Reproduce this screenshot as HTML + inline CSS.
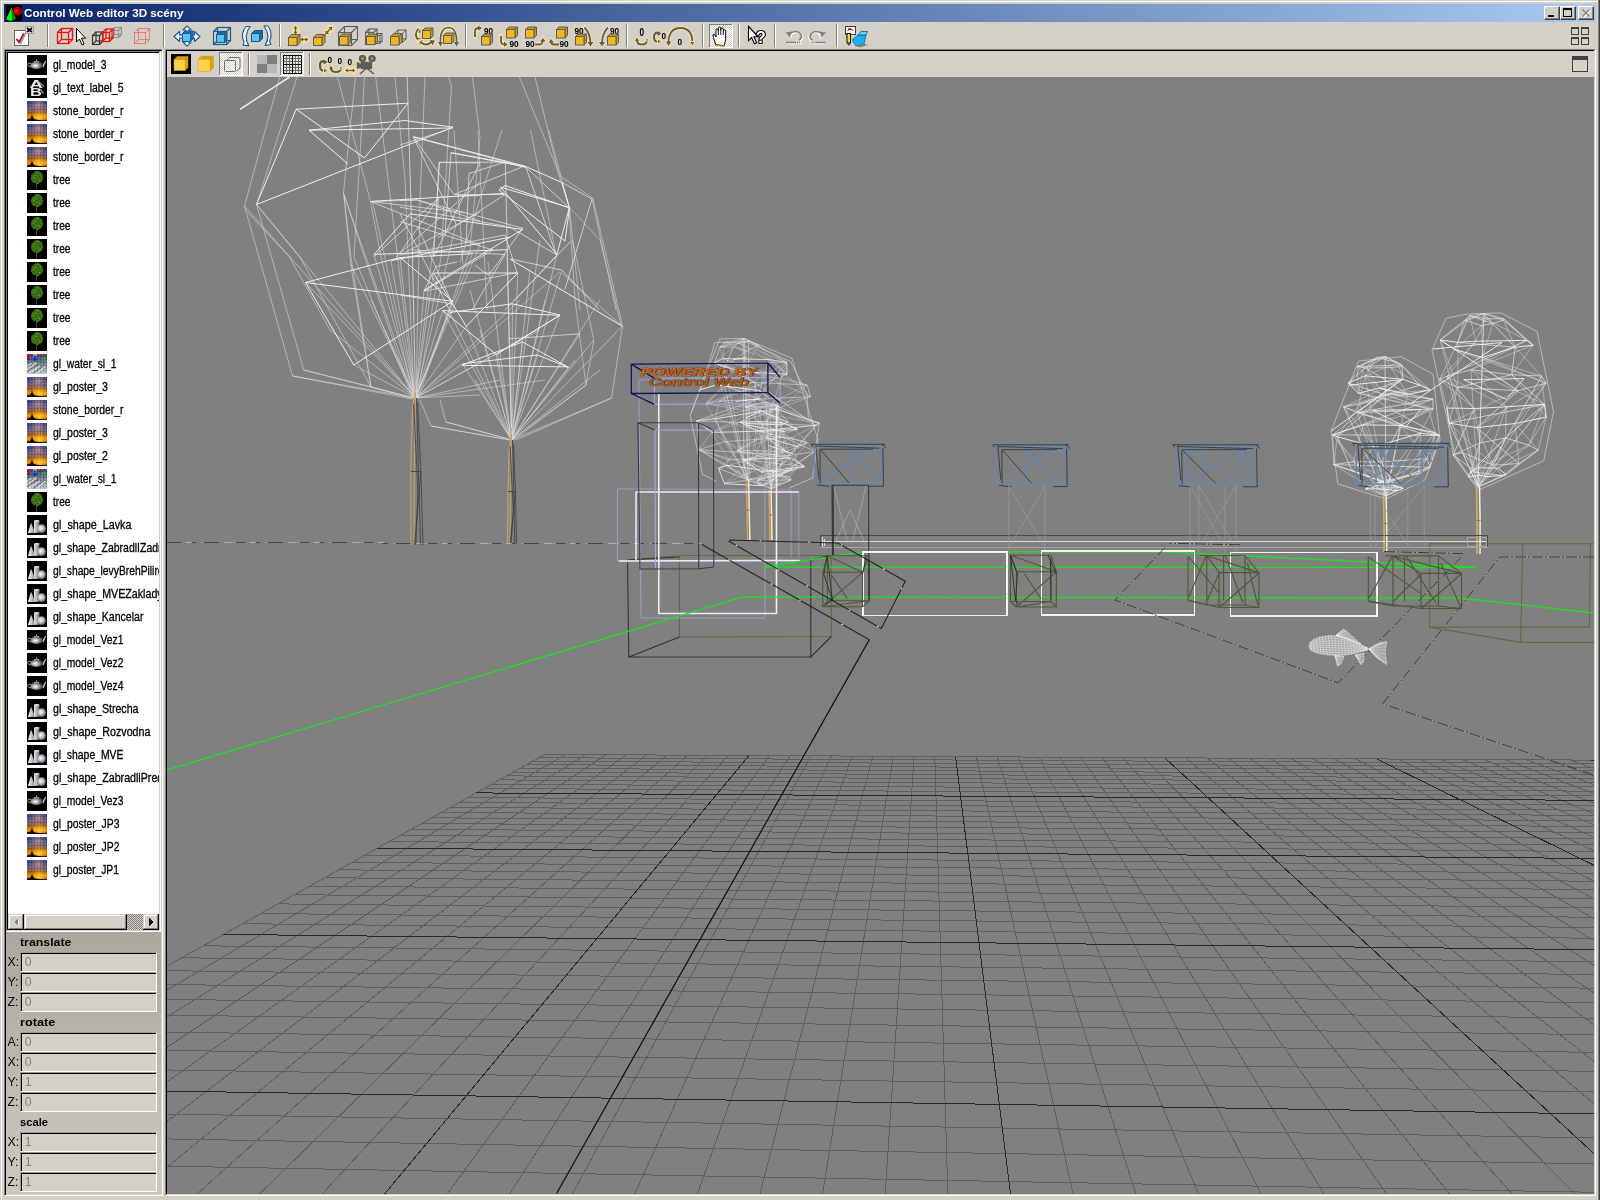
<!DOCTYPE html><html lang="cs"><head><meta charset="utf-8"><title>Control Web editor 3D scény</title><style>
*{margin:0;padding:0;box-sizing:border-box}
html,body{width:1600px;height:1200px;overflow:hidden;background:#d4d0c8;font-family:"Liberation Sans",sans-serif;font-size:11px;color:#000}
.a{position:absolute}
#win{position:absolute;left:0;top:0;width:1600px;height:1200px;background:#d4d0c8}
#title{left:4px;top:4px;width:1592px;height:18px;background:linear-gradient(90deg,#0a246a 0%,#a6caf0 100%)}
#title span{position:absolute;left:19.5px;top:2px;color:#fff;font-weight:bold;font-size:11px;line-height:14px;white-space:nowrap;transform-origin:0 0;transform:scaleX(1.062)}
.cb{position:absolute;top:6px;width:16px;height:14px;background:#d4d0c8;border:1px solid;border-color:#fff #404040 #404040 #fff;box-shadow:inset -1px -1px 0 #808080}
.sep{position:absolute;top:24px;width:2px;height:23px;border-left:1px solid #808080;border-right:1px solid #fff}
.sep2{position:absolute;top:53px;width:2px;height:22px;border-left:1px solid #808080;border-right:1px solid #fff}
#list{left:8px;top:53px;width:151px;height:861px;background:#fff;overflow:hidden}
.it{position:absolute;left:0;width:152px;height:23px}
.it svg{position:absolute;left:19px;top:2px}
.it span{position:absolute;left:44.5px;top:5px;line-height:14px;white-space:nowrap;font-size:12.3px;transform-origin:0 0;display:inline-block}
.lbl{position:absolute;left:7.5px;width:14px;line-height:14px;font-size:12.3px;white-space:nowrap}
.hd{position:absolute;left:19.5px;font-weight:bold;line-height:14px;font-size:11px;transform-origin:0 0}
.fld{position:absolute;left:20px;width:137px;height:20px;background:#d4d0c8;border-top:1px solid #9c988f;border-left:1px solid #9c988f;border-bottom:1px solid #fff;border-right:1px solid #fff;box-shadow:inset 1px 1px 0 #000}
.fld span{position:absolute;left:3.7px;top:1.7px;color:#808080;line-height:14px;font-size:12.3px}
.it span,.lbl,.hd,.fld span{filter:grayscale(1)}
.it span{-webkit-text-stroke:0.3px #000}
</style></head><body><div id="win">
<div class="a" style="left:1px;top:1px;width:1597px;height:1px;background:#fff"></div>
<div class="a" style="left:1px;top:1px;width:1px;height:1199px;background:#fff"></div>
<div class="a" style="left:1598px;top:0;width:1px;height:1200px;background:#808080"></div>
<div class="a" style="left:1599px;top:0;width:1px;height:1200px;background:#404040"></div>
<div id="title" class="a"><svg width="16" height="16" viewBox="0 0 16 16" style="position:absolute;left:2px;top:1px" ><rect width="16" height="16" fill="#000"/><circle cx="11.600" cy="6.200" r="4.400" fill="#980000"/><rect x="8.300" y="4" width="3.800" height="4" fill="#ff0000"/><rect x="12" y="4.500" width="1" height="3" fill="#c00000"/><path d="M5.300 3L0.200 14Q2.500 16.200 6 15.800V3.500z" fill="#00ff00"/><path d="M5.500 3L10 13.500Q8.500 15.500 6 15.800z" fill="#008800"/></svg><span>Control Web editor 3D scény</span></div>
<div class="cb" style="left:1544px"><svg width="14" height="12" viewBox="0 0 14 12" style="position:absolute;left:0;top:0" ><rect x="3" y="8" width="6" height="2" fill="#000"/></svg></div>
<div class="cb" style="left:1560px"><svg width="14" height="12" viewBox="0 0 14 12" style="position:absolute;left:0;top:0" ><rect x="2.5" y="1.5" width="8" height="8" fill="none" stroke="#000"/><rect x="2" y="1" width="9" height="2" fill="#000"/></svg></div>
<div class="cb" style="left:1578px"><svg width="14" height="12" viewBox="0 0 14 12" style="position:absolute;left:0;top:0" ><path d="M4.5 3.5l7 7M11.5 3.5l-7 7" stroke="#fff" stroke-width="1.1"/><path d="M3.5 2.5l7 7M10.5 2.5l-7 7" stroke="#808080" stroke-width="1.2" /></svg></div>
<svg width="1600" height="28" viewBox="0 22 1600 28" style="position:absolute;left:0;top:22px" shape-rendering="geometricPrecision"><defs><pattern id="dith" width="2" height="2" patternUnits="userSpaceOnUse"><rect width="2" height="2" fill="#fff"/><rect width="1" height="1" fill="#d4d0c8"/><rect x="1" y="1" width="1" height="1" fill="#d4d0c8"/></pattern></defs><rect x="47" y="24" width="1" height="23" fill="#808080"/><rect x="48" y="24" width="1" height="23" fill="#fff"/><rect x="163" y="24" width="1" height="23" fill="#808080"/><rect x="164" y="24" width="1" height="23" fill="#fff"/><rect x="279" y="24" width="1" height="23" fill="#808080"/><rect x="280" y="24" width="1" height="23" fill="#fff"/><rect x="465" y="24" width="1" height="23" fill="#808080"/><rect x="466" y="24" width="1" height="23" fill="#fff"/><rect x="626" y="24" width="1" height="23" fill="#808080"/><rect x="627" y="24" width="1" height="23" fill="#fff"/><rect x="702" y="24" width="1" height="23" fill="#808080"/><rect x="703" y="24" width="1" height="23" fill="#fff"/><rect x="738" y="24" width="1" height="23" fill="#808080"/><rect x="739" y="24" width="1" height="23" fill="#fff"/><rect x="774" y="24" width="1" height="23" fill="#808080"/><rect x="775" y="24" width="1" height="23" fill="#fff"/><rect x="836" y="24" width="1" height="23" fill="#808080"/><rect x="837" y="24" width="1" height="23" fill="#fff"/><g shape-rendering="crispEdges"><rect x="14.5" y="30.5" width="14" height="15" fill="#fff" stroke="#686868"/><rect x="25.5" y="26.5" width="8" height="7" fill="#e8e8e8" stroke="#a0a0a0"/></g><path d="M27 28l5 4M32 28l-5 4" stroke="#000" stroke-width="1.800"/><path d="M16.300 39l2.800 3.300L23.800 33.300" stroke="#a4a0b8" stroke-width="2" fill="none" transform="translate(1.6,0.6)"/><path d="M16.300 39l2.800 3.300L23.800 33.300" stroke="#b00808" stroke-width="1.700" fill="none"/><g fill="none" stroke="#f01010" stroke-width="1.3"><rect x="57.5" y="32.5" width="11" height="11"/><rect x="61.5" y="28.5" width="11" height="11"/><path d="M57.5 32.5l4 -4M68.5 32.5l4 -4M68.5 43.5l4 -4M57.5 43.5l4 -4"/></g><path d="M76.5 28.5v13.5l3-3 2.6 6 2-1-2.6-5.8h4.2z" fill="#fff" stroke="#000" stroke-width="1" stroke-linejoin="miter"/><g fill="none" stroke="#909090" stroke-width="1.1"><rect x="111.5" y="30.5" width="7" height="7"/><rect x="114.5" y="27.5" width="7" height="7"/><path d="M111.5 30.5l3 -3M118.5 30.5l3 -3M118.5 37.5l3 -3M111.5 37.5l3 -3"/></g><g fill="none" stroke="#383838" stroke-width="1.2"><rect x="92.5" y="35.5" width="7" height="9"/><rect x="96" y="32" width="7" height="9"/><path d="M92.5 35.5l3.5 -3.5M99.5 35.5l3.5 -3.5M99.5 44.5l3.5 -3.5M92.5 44.5l3.5 -3.5"/></g><g fill="none" stroke="#f01010" stroke-width="1.3"><rect x="102.5" y="32.5" width="7" height="9"/><rect x="106" y="29" width="7" height="9"/><path d="M102.5 32.5l3.5 -3.5M109.5 32.5l3.5 -3.5M109.5 41.5l3.5 -3.5M102.5 41.5l3.5 -3.5"/></g><g fill="none" stroke="#f83030" stroke-width="1" stroke-dasharray="1 1"><rect x="134.5" y="32.5" width="11" height="11"/><rect x="138.5" y="28.5" width="11" height="11"/><path d="M134.5 32.5l4 -4M145.5 32.5l4 -4M145.5 43.5l4 -4M134.5 43.5l4 -4"/></g><g fill="#fff" stroke="#1c5c94" stroke-width="1.2" stroke-linejoin="round"><path d="M174 36.5l5.5-5v3.4h4v3.2h-4v3.4z"/><path d="M200 36.5l-5.5-5v3.4h-4v3.2h4v3.4z"/><path d="M187 25.8l4 4.2h-2.4v2.5h-3.2V30H183z"/><path d="M187 46.2l4-4.2h-2.4v-2h-3.2v2H183z"/></g><polygon points="182.5,33.5 185,31 193,31 190.5,33.5" fill="#1c6ca4" stroke="#1c5c94" stroke-width="1" stroke-linejoin="round"/><polygon points="190.5,33.5 193,31 193,39 190.5,41.5" fill="#1c6ca4" stroke="#1c5c94" stroke-width="1" stroke-linejoin="round"/><rect x="182.5" y="33.5" width="8" height="8" fill="#5cc0f8" stroke="#1c5c94" stroke-width="1"/><g fill="none" stroke="#1c5c94" stroke-width="1.2"><rect x="213.5" y="31.5" width="13" height="13"/><rect x="217.5" y="27.5" width="13" height="13"/><path d="M213.5 31.5l4 -4M226.5 31.5l4 -4M226.5 44.5l4 -4M213.5 44.5l4 -4"/></g><polygon points="216.5,34.5 219,32 227,32 224.5,34.5" fill="#1c6ca4" stroke="#1c5c94" stroke-width="1" stroke-linejoin="round"/><polygon points="224.5,34.5 227,32 227,40 224.5,42.5" fill="#1c6ca4" stroke="#1c5c94" stroke-width="1" stroke-linejoin="round"/><rect x="216.5" y="34.5" width="8" height="8" fill="#5cc0f8" stroke="#1c5c94" stroke-width="1"/><g fill="#fff" stroke="#1c5c94" stroke-width="1.2" stroke-linejoin="round"><path d="M250 26.5q-7 9.5-1.2 19.3l-5.6-.6.8-3.6q-4-7.6 2-15.1z"/><path d="M264 26q7 9.5 1.2 19.5l5.6-1-1.2-3.3q3.6-8-1.6-15.2z"/></g><polygon points="251.5,33.5 254.5,30.5 262.5,30.5 259.5,33.5" fill="#1c6ca4" stroke="#1c5c94" stroke-width="1" stroke-linejoin="round"/><polygon points="259.5,33.5 262.5,30.5 262.5,38.5 259.5,41.5" fill="#1c6ca4" stroke="#1c5c94" stroke-width="1" stroke-linejoin="round"/><rect x="251.5" y="33.5" width="8" height="8" fill="#5cc0f8" stroke="#1c5c94" stroke-width="1"/><path d="M295.5 26.3L295.5 34.0M295.5 34.0L293.3 31.8L297.7 31.8ZM295.5 26.3L293.3 28.5L297.7 28.5Z" stroke="#ffe48c" stroke-width="3.3" fill="#ffe48c" stroke-linejoin="round"/><path d="M295.5 26.3L295.5 34.0" stroke="#5c5c64" stroke-width="1.3" fill="none"/><path d="M295.5 34.0L293.3 31.8L297.7 31.8ZM295.5 26.3L293.3 28.5L297.7 28.5Z" fill="#5c5c64"/><path d="M300.5 39.5L308.0 39.5M308.0 39.5L305.8 41.7L305.8 37.3ZM300.5 39.5L302.7 41.7L302.7 37.3Z" stroke="#ffe48c" stroke-width="3.3" fill="#ffe48c" stroke-linejoin="round"/><path d="M300.5 39.5L308.0 39.5" stroke="#5c5c64" stroke-width="1.3" fill="none"/><path d="M308.0 39.5L305.8 41.7L305.8 37.3ZM300.5 39.5L302.7 41.7L302.7 37.3Z" fill="#5c5c64"/><polygon points="288.5,37.5 291.5,34.5 300,34.5 297,37.5" fill="#d09c08" stroke="#5c5c64" stroke-width="1" stroke-linejoin="round"/><polygon points="297,37.5 300,34.5 300,42.5 297,45.5" fill="#d09c08" stroke="#5c5c64" stroke-width="1" stroke-linejoin="round"/><rect x="288.5" y="37.5" width="8.5" height="8" fill="#f0b81c" stroke="#5c5c64" stroke-width="1"/><path d="M325.5 34.0L332.0 27.0M332.0 27.0L332.1 30.7L328.3 27.1ZM325.5 34.0L329.2 33.9L325.4 30.3Z" stroke="#ffe48c" stroke-width="3.3" fill="#ffe48c" stroke-linejoin="round"/><path d="M325.5 34.0L332.0 27.0" stroke="#5c5c64" stroke-width="1.3" fill="none"/><path d="M332.0 27.0L332.1 30.7L328.3 27.1ZM325.5 34.0L329.2 33.9L325.4 30.3Z" fill="#5c5c64"/><polygon points="313.5,37.5 316.5,34.5 325,34.5 322,37.5" fill="#d09c08" stroke="#5c5c64" stroke-width="1" stroke-linejoin="round"/><polygon points="322,37.5 325,34.5 325,42.5 322,45.5" fill="#d09c08" stroke="#5c5c64" stroke-width="1" stroke-linejoin="round"/><rect x="313.5" y="37.5" width="8.5" height="8" fill="#f0b81c" stroke="#5c5c64" stroke-width="1"/><g fill="none" stroke="#5c5c64" stroke-width="1.1"><rect x="338.5" y="32.5" width="13" height="13"/><rect x="344.5" y="26.5" width="13" height="13"/><path d="M338.5 32.5l6 -6M351.5 32.5l6 -6M351.5 45.5l6 -6M338.5 45.5l6 -6"/></g><polygon points="339.5,36.5 342,34 350.5,34 348,36.5" fill="#d09c08" stroke="#5c5c64" stroke-width="1" stroke-linejoin="round"/><polygon points="348,36.5 350.5,34 350.5,42.5 348,45" fill="#d09c08" stroke="#5c5c64" stroke-width="1" stroke-linejoin="round"/><rect x="339.5" y="36.5" width="8.5" height="8.5" fill="#f0b81c" stroke="#5c5c64" stroke-width="1"/><g fill="none" stroke="#5c5c64" stroke-width="1.1"><rect x="365.5" y="32.5" width="8" height="12"/><rect x="369" y="29" width="8" height="12"/><path d="M365.5 32.5l3.5 -3.5M373.5 32.5l3.5 -3.5M373.5 44.5l3.5 -3.5M365.5 44.5l3.5 -3.5"/></g><g fill="none" stroke="#5c5c64" stroke-width="1"><rect x="375" y="35.5" width="5" height="8"/><rect x="377" y="33.5" width="5" height="8"/><path d="M375 35.5l2 -2M380 35.5l2 -2M380 43.5l2 -2M375 43.5l2 -2"/></g><polygon points="366.5,36.5 369,34 377.5,34 375,36.5" fill="#d09c08" stroke="#5c5c64" stroke-width="1" stroke-linejoin="round"/><polygon points="375,36.5 377.5,34 377.5,42 375,44.5" fill="#d09c08" stroke="#5c5c64" stroke-width="1" stroke-linejoin="round"/><rect x="366.5" y="36.5" width="8.5" height="8" fill="#f0b81c" stroke="#5c5c64" stroke-width="1"/><g fill="none" stroke="#5c5c64" stroke-width="1"><rect x="394.5" y="33.5" width="8" height="9"/><rect x="398" y="30" width="8" height="9"/><path d="M394.5 33.5l3.5 -3.5M402.5 33.5l3.5 -3.5M402.5 42.5l3.5 -3.5M394.5 42.5l3.5 -3.5"/></g><polygon points="390.5,36.5 393.5,33.5 402,33.5 399,36.5" fill="#d09c08" stroke="#5c5c64" stroke-width="1" stroke-linejoin="round"/><polygon points="399,36.5 402,33.5 402,42 399,45" fill="#d09c08" stroke="#5c5c64" stroke-width="1" stroke-linejoin="round"/><rect x="390.5" y="36.5" width="8.5" height="8.5" fill="#f0b81c" stroke="#5c5c64" stroke-width="1"/><path d="M419 30q-5 5 0 10" stroke="#ffe48c" stroke-width="3.8" fill="none" stroke-linecap="round"/><polygon points="415.5,31.5 420.5,28.5 420.5,33" fill="#ffe48c" stroke="#ffe48c" stroke-width="2" stroke-linejoin="round"/><path d="M419 30q-5 5 0 10" stroke="#5c5c64" stroke-width="1.8" fill="none"/><polygon points="415.5,31.5 420.5,28.5 420.5,33" fill="#5c5c64"/><path d="M418.5 28.5q-5.5 6 0.5 12.5" stroke="#ffe48c" stroke-width="3.8" fill="none" stroke-linecap="round"/><polygon points="416,38 421.5,38.5 419,43" fill="#ffe48c" stroke="#ffe48c" stroke-width="2" stroke-linejoin="round"/><path d="M418.5 28.5q-5.5 6 0.5 12.5" stroke="#5c5c64" stroke-width="1.8" fill="none"/><polygon points="416,38 421.5,38.5 419,43" fill="#5c5c64"/><path d="M420 41.5q6 6 12 0" stroke="#ffe48c" stroke-width="3.8" fill="none" stroke-linecap="round"/><polygon points="418,40.5 423,40 420,45.5" fill="#ffe48c" stroke="#ffe48c" stroke-width="2" stroke-linejoin="round"/><path d="M420 41.5q6 6 12 0" stroke="#5c5c64" stroke-width="1.8" fill="none"/><polygon points="418,40.5 423,40 420,45.5" fill="#5c5c64"/><path d="M420 41.5q6 6 12 0" stroke="#ffe48c" stroke-width="3.8" fill="none" stroke-linecap="round"/><polygon points="430,40 435,40.5 432.5,45.5" fill="#ffe48c" stroke="#ffe48c" stroke-width="2" stroke-linejoin="round"/><path d="M420 41.5q6 6 12 0" stroke="#5c5c64" stroke-width="1.8" fill="none"/><polygon points="430,40 435,40.5 432.5,45.5" fill="#5c5c64"/><polygon points="422.5,30.5 425,28 433,28 430.5,30.5" fill="#d09c08" stroke="#5c5c64" stroke-width="1" stroke-linejoin="round"/><polygon points="430.5,30.5 433,28 433,36 430.5,38.5" fill="#d09c08" stroke="#5c5c64" stroke-width="1" stroke-linejoin="round"/><rect x="422.5" y="30.5" width="8" height="8" fill="#f0b81c" stroke="#5c5c64" stroke-width="1"/><path d="M440.5 44q-1-16 8-16.5q9 .5 8 16.5" stroke="#ffe48c" stroke-width="3.6" fill="none" stroke-linecap="round"/><polygon points="438,42 443,42 440.5,46.5" fill="#ffe48c" stroke="#ffe48c" stroke-width="2" stroke-linejoin="round"/><path d="M440.5 44q-1-16 8-16.5q9 .5 8 16.5" stroke="#5c5c64" stroke-width="1.6" fill="none"/><polygon points="438,42 443,42 440.5,46.5" fill="#5c5c64"/><polygon points="454,42 459,42 456.5,46.5" fill="#5c5c64"/><polygon points="443.5,35.5 446,33 454,33 451.5,35.5" fill="#d09c08" stroke="#5c5c64" stroke-width="1" stroke-linejoin="round"/><polygon points="451.5,35.5 454,33 454,41 451.5,43.5" fill="#d09c08" stroke="#5c5c64" stroke-width="1" stroke-linejoin="round"/><rect x="443.5" y="35.5" width="8" height="8" fill="#f0b81c" stroke="#5c5c64" stroke-width="1"/><path d="M475 37v-6q0-3 4-3" stroke="#ffe48c" stroke-width="3.8" fill="none" stroke-linecap="round"/><polygon points="478,25.5 482,28 478,30.8" fill="#ffe48c" stroke="#ffe48c" stroke-width="2" stroke-linejoin="round"/><path d="M475 37v-6q0-3 4-3" stroke="#5c5c64" stroke-width="1.8" fill="none"/><polygon points="478,25.5 482,28 478,30.8" fill="#5c5c64"/><text x="484" y="34" font-family="Liberation Sans,sans-serif" font-size="9" font-weight="bold" fill="#000" textLength="9.2" lengthAdjust="spacingAndGlyphs" style="filter:grayscale(1)">90</text><polygon points="481.5,36.5 484,34 492.5,34 490,36.5" fill="#d09c08" stroke="#5c5c64" stroke-width="1" stroke-linejoin="round"/><polygon points="490,36.5 492.5,34 492.5,42.5 490,45" fill="#d09c08" stroke="#5c5c64" stroke-width="1" stroke-linejoin="round"/><rect x="481.5" y="36.5" width="8.5" height="8.5" fill="#f0b81c" stroke="#5c5c64" stroke-width="1"/><path d="M501 36v5q0 3.5 4 3.5" stroke="#ffe48c" stroke-width="3.8" fill="none" stroke-linecap="round"/><polygon points="504,41.5 507.5,44.5 504,47" fill="#ffe48c" stroke="#ffe48c" stroke-width="2" stroke-linejoin="round"/><path d="M501 36v5q0 3.5 4 3.5" stroke="#5c5c64" stroke-width="1.8" fill="none"/><polygon points="504,41.5 507.5,44.5 504,47" fill="#5c5c64"/><text x="509.5" y="47.3" font-family="Liberation Sans,sans-serif" font-size="9" font-weight="bold" fill="#000" textLength="9.2" lengthAdjust="spacingAndGlyphs" style="filter:grayscale(1)">90</text><polygon points="506.5,29.5 509,27 517.5,27 515,29.5" fill="#d09c08" stroke="#5c5c64" stroke-width="1" stroke-linejoin="round"/><polygon points="515,29.5 517.5,27 517.5,35.5 515,38" fill="#d09c08" stroke="#5c5c64" stroke-width="1" stroke-linejoin="round"/><rect x="506.5" y="29.5" width="8.5" height="8.5" fill="#f0b81c" stroke="#5c5c64" stroke-width="1"/><path d="M535 44.5h4q3.5 0 3.500-3.5" stroke="#ffe48c" stroke-width="3.8" fill="none" stroke-linecap="round"/><polygon points="540,41.5 543,38 545.5,41.5" fill="#ffe48c" stroke="#ffe48c" stroke-width="2" stroke-linejoin="round"/><path d="M535 44.5h4q3.5 0 3.500-3.5" stroke="#5c5c64" stroke-width="1.8" fill="none"/><polygon points="540,41.5 543,38 545.5,41.5" fill="#5c5c64"/><text x="525.5" y="47.3" font-family="Liberation Sans,sans-serif" font-size="9" font-weight="bold" fill="#000" textLength="9.2" lengthAdjust="spacingAndGlyphs" style="filter:grayscale(1)">90</text><polygon points="525.5,29.5 528,27 536.5,27 534,29.5" fill="#d09c08" stroke="#5c5c64" stroke-width="1" stroke-linejoin="round"/><polygon points="534,29.5 536.5,27 536.5,35.5 534,38" fill="#d09c08" stroke="#5c5c64" stroke-width="1" stroke-linejoin="round"/><rect x="525.5" y="29.5" width="8.5" height="8.5" fill="#f0b81c" stroke="#5c5c64" stroke-width="1"/><path d="M559 44.5h-5q-3 0-3-3" stroke="#ffe48c" stroke-width="3.8" fill="none" stroke-linecap="round"/><polygon points="548.5,42.5 551,39 554,42.5" fill="#ffe48c" stroke="#ffe48c" stroke-width="2" stroke-linejoin="round"/><path d="M559 44.5h-5q-3 0-3-3" stroke="#5c5c64" stroke-width="1.8" fill="none"/><polygon points="548.5,42.5 551,39 554,42.5" fill="#5c5c64"/><text x="559.5" y="47.3" font-family="Liberation Sans,sans-serif" font-size="9" font-weight="bold" fill="#000" textLength="9.2" lengthAdjust="spacingAndGlyphs" style="filter:grayscale(1)">90</text><polygon points="556.5,29.5 559,27 567.5,27 565,29.5" fill="#d09c08" stroke="#5c5c64" stroke-width="1" stroke-linejoin="round"/><polygon points="565,29.5 567.5,27 567.5,35.5 565,38" fill="#d09c08" stroke="#5c5c64" stroke-width="1" stroke-linejoin="round"/><rect x="556.5" y="29.5" width="8.5" height="8.5" fill="#f0b81c" stroke="#5c5c64" stroke-width="1"/><path d="M584.5 27.500q6 6 6 16" stroke="#ffe48c" stroke-width="3.8" fill="none" stroke-linecap="round"/><polygon points="587.5,42 593.5,42 590.5,46.5" fill="#ffe48c" stroke="#ffe48c" stroke-width="2" stroke-linejoin="round"/><path d="M584.5 27.500q6 6 6 16" stroke="#5c5c64" stroke-width="1.8" fill="none"/><polygon points="587.5,42 593.5,42 590.5,46.5" fill="#5c5c64"/><text x="574.5" y="34" font-family="Liberation Sans,sans-serif" font-size="9" font-weight="bold" fill="#000" textLength="9.2" lengthAdjust="spacingAndGlyphs" style="filter:grayscale(1)">90</text><polygon points="575.5,36.5 578,34 586.5,34 584,36.5" fill="#d09c08" stroke="#5c5c64" stroke-width="1" stroke-linejoin="round"/><polygon points="584,36.5 586.5,34 586.5,42.5 584,45" fill="#d09c08" stroke="#5c5c64" stroke-width="1" stroke-linejoin="round"/><rect x="575.5" y="36.5" width="8.5" height="8.5" fill="#f0b81c" stroke="#5c5c64" stroke-width="1"/><path d="M608 27.500q-6 6-6 16" stroke="#ffe48c" stroke-width="3.8" fill="none" stroke-linecap="round"/><polygon points="599,42 605,42 602,46.5" fill="#ffe48c" stroke="#ffe48c" stroke-width="2" stroke-linejoin="round"/><path d="M608 27.500q-6 6-6 16" stroke="#5c5c64" stroke-width="1.8" fill="none"/><polygon points="599,42 605,42 602,46.5" fill="#5c5c64"/><text x="610" y="34" font-family="Liberation Sans,sans-serif" font-size="9" font-weight="bold" fill="#000" textLength="9.2" lengthAdjust="spacingAndGlyphs" style="filter:grayscale(1)">90</text><polygon points="607.5,36.5 610,34 618.5,34 616,36.5" fill="#d09c08" stroke="#5c5c64" stroke-width="1" stroke-linejoin="round"/><polygon points="616,36.5 618.5,34 618.5,42.5 616,45" fill="#d09c08" stroke="#5c5c64" stroke-width="1" stroke-linejoin="round"/><rect x="607.5" y="36.5" width="8.5" height="8.5" fill="#f0b81c" stroke="#5c5c64" stroke-width="1"/><text x="639.5" y="36" font-family="Liberation Sans,sans-serif" font-size="10" font-weight="bold" fill="#000" textLength="4.6" lengthAdjust="spacingAndGlyphs" style="filter:grayscale(1)">0</text><path d="M637 40q0 4.500 5 4.500q5 0 5-4.500" stroke="#ffe48c" stroke-width="4" fill="none" stroke-linecap="round"/><polygon points="635,41 639,41 637,37.5" fill="#ffe48c" stroke="#ffe48c" stroke-width="2" stroke-linejoin="round"/><path d="M637 40q0 4.500 5 4.500q5 0 5-4.500" stroke="#5c5c64" stroke-width="2" fill="none"/><polygon points="635,41 639,41 637,37.5" fill="#5c5c64"/><polygon points="645,41 649,41 647,37.5" fill="#5c5c64" stroke="#ffe48c" stroke-width="1"/><path d="M659 33.500q-5-2-5 3.500q0 6 5 4" stroke="#ffe48c" stroke-width="4.2" fill="none" stroke-linecap="round"/><polygon points="657.5,31 661.5,33.5 657.5,36" fill="#ffe48c" stroke="#ffe48c" stroke-width="2" stroke-linejoin="round"/><path d="M659 33.500q-5-2-5 3.500q0 6 5 4" stroke="#5c5c64" stroke-width="2.2" fill="none"/><polygon points="657.5,31 661.5,33.5 657.5,36" fill="#5c5c64"/><polygon points="657.5,39 661.5,41.5 657.5,44" fill="#5c5c64" stroke="#ffe48c" stroke-width="1"/><text x="661.5" y="38.5" font-family="Liberation Sans,sans-serif" font-size="9" font-weight="bold" fill="#000" textLength="4.6" lengthAdjust="spacingAndGlyphs" style="filter:grayscale(1)">0</text><path d="M668.500 43q0-15 12-15q12 0 12 15" stroke="#ffe48c" stroke-width="3.8" fill="none" stroke-linecap="round"/><polygon points="666,41.5 671.5,41.5 668.5,46" fill="#ffe48c" stroke="#ffe48c" stroke-width="2" stroke-linejoin="round"/><path d="M668.500 43q0-15 12-15q12 0 12 15" stroke="#5c5c64" stroke-width="1.8" fill="none"/><polygon points="666,41.5 671.5,41.5 668.5,46" fill="#5c5c64"/><polygon points="689.500,41.5 695,41.5 692.5,46" fill="#5c5c64" stroke="#ffe48c" stroke-width="1"/><text x="677.5" y="44.5" font-family="Liberation Sans,sans-serif" font-size="9" font-weight="bold" fill="#000" textLength="4.6" lengthAdjust="spacingAndGlyphs" style="filter:grayscale(1)">0</text><rect x="709" y="24" width="24" height="24" fill="url(#dith)"/><path d="M709 24.5h24M709.5 24v24" stroke="#808080" stroke-width="1" fill="none"/><path d="M709 47.5h24M732.5 24v24" stroke="#fff" stroke-width="1" fill="none"/><path d="M715.500 44.500l-2-7q-1.500-3 0.500-3.500l2 3v-6.500q0-1.500 1.200-1.500q1.200 0 1.200 1.500v-2q0-1.500 1.200-1.500q1.300 0 1.300 1.500v1q0-1.500 1.200-1.500q1.300 0 1.300 1.500v1.500q0-1.200 1.100-1.200q1.200 0 1.200 1.500v8l-1.500 6.700z" fill="#fff" stroke="#000" stroke-width="1"/><path d="M718.300 30v5M720.800 28.500v6.500M723.300 30v5" stroke="#000" stroke-width="0.9"/><path d="M715.500 45.500h9.500" stroke="#e0a020" stroke-width="1.8" stroke-dasharray="1.5 1"/><path d="M748.500 26.500v14l3.200-3 2.700 6.300 2.200-1-2.700-6h4.400z" fill="#fff" stroke="#000" stroke-width="1.1"/><g style="filter:grayscale(1)" font-family="Liberation Sans,sans-serif" font-weight="bold" font-size="16"><text x="756" y="42.500" fill="#000" stroke="#000" stroke-width="2.2" stroke-linejoin="round">?</text><text x="756" y="42.500" fill="#fff">?</text></g><g transform="translate(785,0) scale(1,1) translate(1,1)" stroke="#fff" fill="#fff"><path d="M4 34q7.500-5 11.500 0q2.500 4-1.500 6" fill="none" stroke-width="1.6"/><path d="M0.500 32.500l6.500-1-2 6z" stroke="none"/><path d="M1 42.500h10M12 42.500h1M14 42.500h1" stroke-width="1.4"/></g><g transform="translate(785,0) scale(1,1)" stroke="#808080" fill="#808080"><path d="M4 34q7.500-5 11.500 0q2.500 4-1.500 6" fill="none" stroke-width="1.6"/><path d="M0.500 32.500l6.500-1-2 6z" stroke="none"/><path d="M1 42.500h10M12 42.500h1M14 42.500h1" stroke-width="1.4"/></g><g transform="translate(826.5,0) scale(-1,1) translate(1,1)" stroke="#fff" fill="#fff"><path d="M4 34q7.500-5 11.500 0q2.500 4-1.500 6" fill="none" stroke-width="1.6"/><path d="M0.500 32.500l6.500-1-2 6z" stroke="none"/><path d="M1 42.500h10M12 42.500h1M14 42.500h1" stroke-width="1.4"/></g><g transform="translate(826.5,0) scale(-1,1)" stroke="#808080" fill="#808080"><path d="M4 34q7.500-5 11.500 0q2.500 4-1.500 6" fill="none" stroke-width="1.6"/><path d="M0.500 32.500l6.500-1-2 6z" stroke="none"/><path d="M1 42.500h10M12 42.500h1M14 42.500h1" stroke-width="1.4"/></g><polygon points="852,40 858,35 866,35 864,44 856,46" fill="#20b0e8" stroke="#1060a0" stroke-width="0.8"/><polygon points="856,46 864,44 868,45 860,47.500" fill="#808080"/><polygon points="858,35 861,31.500 867.500,31.500 866,35" fill="#60d0ff" stroke="#1060a0" stroke-width="0.8"/><rect x="845.500" y="26.500" width="10" height="8" fill="#fff" stroke="#404040" stroke-width="1"/><path d="M847.500 30.500q3-3 6 0" stroke="#e00000" stroke-width="1" fill="none"/><path d="M848 29h3" stroke="#000" stroke-width="1"/><rect x="847" y="33.500" width="3.500" height="9.500" fill="#ffe000" stroke="#000" stroke-width="1"/><path d="M847 43.500h4l-2 2.500z" fill="#2040c0"/><g shape-rendering="crispEdges" fill="#d4d0c8" stroke="#404040" stroke-width="1"><rect x="1571.500" y="27.500" width="7" height="7"/><rect x="1581.500" y="27.500" width="7" height="7"/><rect x="1571.500" y="37.500" width="7" height="7"/><rect x="1581.500" y="37.500" width="7" height="7"/><path d="M1571 28.500h8M1581 28.500h8M1571 38.500h8M1581 38.500h8" fill="none"/></g></svg>
<div class="a" style="left:4px;top:49px;width:159px;height:1147px;border:1px solid;border-color:#808080 #fff #fff #808080;"></div>
<div class="a" style="left:5px;top:50px;width:157px;height:1px;background:#000"></div>
<div class="a" style="left:5px;top:50px;width:1px;height:1145px;background:#000"></div>
<div class="a" style="left:6px;top:51px;width:155px;height:881px;border:1px solid;border-color:#808080 #fff #fff #808080;"></div>
<div class="a" style="left:7px;top:52px;width:152px;height:1px;background:#000"></div>
<div class="a" style="left:159px;top:52px;width:1px;height:879px;background:#d4d0c8"></div>
<div class="a" style="left:7px;top:52px;width:1px;height:878px;background:#000"></div>
<svg width="0" height="0" viewBox="0 0 0 0" style="position:absolute;left:0;top:0" ><defs><radialGradient id="gTea" cx="0.42" cy="0.55" r="0.5"><stop offset="0" stop-color="#fff"/><stop offset="0.35" stop-color="#c8c8d0"/><stop offset="1" stop-color="#50504c"/></radialGradient><linearGradient id="gSky" x1="0" y1="0" x2="0" y2="1"><stop offset="0" stop-color="#2c3c78"/><stop offset="0.3" stop-color="#5c5c88"/><stop offset="0.48" stop-color="#7c5c50"/><stop offset="0.6" stop-color="#a85c10"/><stop offset="0.78" stop-color="#e89010"/><stop offset="0.9" stop-color="#c87008"/><stop offset="1" stop-color="#200c04"/></linearGradient><radialGradient id="gSun" cx="0.6" cy="0.85" r="0.45"><stop offset="0" stop-color="#ffd030" stop-opacity="1"/><stop offset="1" stop-color="#ffb020" stop-opacity="0"/></radialGradient><radialGradient id="gCloud" cx="0.55" cy="0.22" r="0.4"><stop offset="0" stop-color="#e0a078" stop-opacity=".8"/><stop offset="1" stop-color="#a08090" stop-opacity="0"/></radialGradient><radialGradient id="gSph" cx="0.42" cy="0.45" r="0.6"><stop offset="0" stop-color="#fff"/><stop offset="0.45" stop-color="#c4c4cc"/><stop offset="1" stop-color="#5c5c60"/></radialGradient><linearGradient id="gCyl" x1="0" y1="0" x2="1" y2="0"><stop offset="0" stop-color="#d8d8dc"/><stop offset="0.5" stop-color="#b4b4bc"/><stop offset="1" stop-color="#606068"/></linearGradient><linearGradient id="gCone" x1="0" y1="0" x2="1" y2="0"><stop offset="0" stop-color="#fff"/><stop offset="0.5" stop-color="#c0c0c8"/><stop offset="1" stop-color="#707078"/></linearGradient><linearGradient id="gWat" x1="0" y1="0" x2="0" y2="1"><stop offset="0" stop-color="#38407c"/><stop offset="0.35" stop-color="#5c6c84"/><stop offset="0.7" stop-color="#98a4a4"/><stop offset="1" stop-color="#c8ccd4"/></linearGradient><pattern id="nz" width="3" height="3" patternUnits="userSpaceOnUse"><rect x="0" y="0" width="1" height="1" fill="#ffd0a0" opacity=".22"/><rect x="1" y="2" width="1" height="1" fill="#000" opacity=".25"/><rect x="2" y="1" width="1" height="1" fill="#c060c0" opacity=".25"/><rect x="1" y="0" width="1" height="1" fill="#2040c0" opacity=".2"/></pattern></defs></svg>
<div id="list" class="a">
<div class="it" style="top:0px"><svg width="20" height="20" viewBox="0 0 20 20" style="" ><rect width="20" height="20" fill="#000"/><path d="M4 8.500q-3.500-1-3.500 1q0.500 2.500 4 2.500" fill="none" stroke="#a8a8b0" stroke-width="0.9"/><path d="M15 11l3.200-5.200l1 .3l-2.700 6.400z" fill="#b8b8c0"/><ellipse cx="9.500" cy="10.200" rx="6.300" ry="3.900" fill="url(#gTea)"/><path d="M7 6.800q2.500-1.300 5 0" stroke="#d0d0d8" stroke-width="0.8" fill="none"/><rect x="9" y="4.200" width="1" height="2" fill="#9090a0"/></svg><span style="transform:scaleX(0.841)">gl_model_3</span></div>
<div class="it" style="top:23px"><svg width="20" height="20" viewBox="0 0 20 20" style="" ><rect width="20" height="20" fill="#000"/><g font-family="Liberation Sans,sans-serif" font-weight="bold" fill="#e8e8f0" style="filter:grayscale(1)"><text x="2.500" y="9.500" font-size="11" textLength="13.500" lengthAdjust="spacingAndGlyphs">A</text><text x="3" y="18.300" font-size="11" textLength="12" lengthAdjust="spacingAndGlyphs">B</text></g><path d="M11 3l6 5.500M13.500 11.500l3 4" stroke="#9088a8" stroke-width="1.400"/></svg><span style="transform:scaleX(0.852)">gl_text_label_5</span></div>
<div class="it" style="top:46px"><svg width="20" height="20" viewBox="0 0 20 20" style="" ><rect width="20" height="20" fill="url(#gSky)"/><rect width="20" height="20" fill="url(#gCloud)"/><rect width="20" height="20" fill="url(#gSun)"/><rect width="20" height="12" fill="url(#nz)"/><path d="M0 20v-1.500l3-0.500l1.200-2l0.800-2.800l0.800 2.800l1.300 2l2.400.8l10.500.7v.5z" fill="#100804"/></svg><span style="transform:scaleX(0.845)">stone_border_r</span></div>
<div class="it" style="top:69px"><svg width="20" height="20" viewBox="0 0 20 20" style="" ><rect width="20" height="20" fill="url(#gSky)"/><rect width="20" height="20" fill="url(#gCloud)"/><rect width="20" height="20" fill="url(#gSun)"/><rect width="20" height="12" fill="url(#nz)"/><path d="M0 20v-1.500l3-0.500l1.200-2l0.800-2.800l0.800 2.800l1.300 2l2.400.8l10.500.7v.5z" fill="#100804"/></svg><span style="transform:scaleX(0.845)">stone_border_r</span></div>
<div class="it" style="top:92px"><svg width="20" height="20" viewBox="0 0 20 20" style="" ><rect width="20" height="20" fill="url(#gSky)"/><rect width="20" height="20" fill="url(#gCloud)"/><rect width="20" height="20" fill="url(#gSun)"/><rect width="20" height="12" fill="url(#nz)"/><path d="M0 20v-1.500l3-0.500l1.200-2l0.800-2.800l0.800 2.800l1.300 2l2.400.8l10.500.7v.5z" fill="#100804"/></svg><span style="transform:scaleX(0.845)">stone_border_r</span></div>
<div class="it" style="top:115px"><svg width="20" height="20" viewBox="0 0 20 20" style="" ><rect width="20" height="20" fill="#000"/><path d="M9 19.500v-6h1v6z" fill="#4c4c10"/><path d="M9.500 1q3-.5 4.500 1.800q2 1 1.500 3.200q1.500 2 0 4q-.5 2.500-3 3q-2 1.600-4 .2q-2.800.3-3.500-2.200q-2-1.800-.8-4q-.5-2.500 1.800-3.500q1-2.300 3.500-2.500z" fill="#3c7410"/><g fill="#183c70"><rect x="7" y="3" width="1" height="1"/><rect x="11" y="4" width="1" height="1"/><rect x="9" y="7" width="1" height="1"/><rect x="13" y="8" width="1" height="1"/><rect x="6" y="9" width="1" height="1"/><rect x="10" y="11" width="1" height="1"/><rect x="12" y="6" width="1" height="1"/><rect x="8" y="12" width="1" height="1"/></g><g fill="#6ca010"><rect x="8" y="5" width="1" height="1"/><rect x="12" y="10" width="1" height="1"/><rect x="6" y="7" width="1" height="1"/><rect x="10" y="2" width="1" height="1"/><rect x="10" y="13" width="1" height="1"/></g></svg><span style="transform:scaleX(0.825)">tree</span></div>
<div class="it" style="top:138px"><svg width="20" height="20" viewBox="0 0 20 20" style="" ><rect width="20" height="20" fill="#000"/><path d="M9 19.500v-6h1v6z" fill="#4c4c10"/><path d="M9.500 1q3-.5 4.500 1.800q2 1 1.500 3.200q1.500 2 0 4q-.5 2.500-3 3q-2 1.600-4 .2q-2.800.3-3.500-2.200q-2-1.800-.8-4q-.5-2.500 1.800-3.500q1-2.300 3.500-2.500z" fill="#3c7410"/><g fill="#183c70"><rect x="7" y="3" width="1" height="1"/><rect x="11" y="4" width="1" height="1"/><rect x="9" y="7" width="1" height="1"/><rect x="13" y="8" width="1" height="1"/><rect x="6" y="9" width="1" height="1"/><rect x="10" y="11" width="1" height="1"/><rect x="12" y="6" width="1" height="1"/><rect x="8" y="12" width="1" height="1"/></g><g fill="#6ca010"><rect x="8" y="5" width="1" height="1"/><rect x="12" y="10" width="1" height="1"/><rect x="6" y="7" width="1" height="1"/><rect x="10" y="2" width="1" height="1"/><rect x="10" y="13" width="1" height="1"/></g></svg><span style="transform:scaleX(0.825)">tree</span></div>
<div class="it" style="top:161px"><svg width="20" height="20" viewBox="0 0 20 20" style="" ><rect width="20" height="20" fill="#000"/><path d="M9 19.500v-6h1v6z" fill="#4c4c10"/><path d="M9.500 1q3-.5 4.500 1.800q2 1 1.500 3.200q1.500 2 0 4q-.5 2.500-3 3q-2 1.600-4 .2q-2.800.3-3.500-2.200q-2-1.800-.8-4q-.5-2.500 1.800-3.500q1-2.300 3.500-2.500z" fill="#3c7410"/><g fill="#183c70"><rect x="7" y="3" width="1" height="1"/><rect x="11" y="4" width="1" height="1"/><rect x="9" y="7" width="1" height="1"/><rect x="13" y="8" width="1" height="1"/><rect x="6" y="9" width="1" height="1"/><rect x="10" y="11" width="1" height="1"/><rect x="12" y="6" width="1" height="1"/><rect x="8" y="12" width="1" height="1"/></g><g fill="#6ca010"><rect x="8" y="5" width="1" height="1"/><rect x="12" y="10" width="1" height="1"/><rect x="6" y="7" width="1" height="1"/><rect x="10" y="2" width="1" height="1"/><rect x="10" y="13" width="1" height="1"/></g></svg><span style="transform:scaleX(0.825)">tree</span></div>
<div class="it" style="top:184px"><svg width="20" height="20" viewBox="0 0 20 20" style="" ><rect width="20" height="20" fill="#000"/><path d="M9 19.500v-6h1v6z" fill="#4c4c10"/><path d="M9.500 1q3-.5 4.500 1.800q2 1 1.500 3.200q1.500 2 0 4q-.5 2.500-3 3q-2 1.600-4 .2q-2.800.3-3.500-2.200q-2-1.800-.8-4q-.5-2.500 1.800-3.500q1-2.300 3.500-2.500z" fill="#3c7410"/><g fill="#183c70"><rect x="7" y="3" width="1" height="1"/><rect x="11" y="4" width="1" height="1"/><rect x="9" y="7" width="1" height="1"/><rect x="13" y="8" width="1" height="1"/><rect x="6" y="9" width="1" height="1"/><rect x="10" y="11" width="1" height="1"/><rect x="12" y="6" width="1" height="1"/><rect x="8" y="12" width="1" height="1"/></g><g fill="#6ca010"><rect x="8" y="5" width="1" height="1"/><rect x="12" y="10" width="1" height="1"/><rect x="6" y="7" width="1" height="1"/><rect x="10" y="2" width="1" height="1"/><rect x="10" y="13" width="1" height="1"/></g></svg><span style="transform:scaleX(0.825)">tree</span></div>
<div class="it" style="top:207px"><svg width="20" height="20" viewBox="0 0 20 20" style="" ><rect width="20" height="20" fill="#000"/><path d="M9 19.500v-6h1v6z" fill="#4c4c10"/><path d="M9.500 1q3-.5 4.500 1.800q2 1 1.500 3.200q1.500 2 0 4q-.5 2.500-3 3q-2 1.600-4 .2q-2.800.3-3.500-2.200q-2-1.800-.8-4q-.5-2.500 1.800-3.500q1-2.300 3.500-2.500z" fill="#3c7410"/><g fill="#183c70"><rect x="7" y="3" width="1" height="1"/><rect x="11" y="4" width="1" height="1"/><rect x="9" y="7" width="1" height="1"/><rect x="13" y="8" width="1" height="1"/><rect x="6" y="9" width="1" height="1"/><rect x="10" y="11" width="1" height="1"/><rect x="12" y="6" width="1" height="1"/><rect x="8" y="12" width="1" height="1"/></g><g fill="#6ca010"><rect x="8" y="5" width="1" height="1"/><rect x="12" y="10" width="1" height="1"/><rect x="6" y="7" width="1" height="1"/><rect x="10" y="2" width="1" height="1"/><rect x="10" y="13" width="1" height="1"/></g></svg><span style="transform:scaleX(0.825)">tree</span></div>
<div class="it" style="top:230px"><svg width="20" height="20" viewBox="0 0 20 20" style="" ><rect width="20" height="20" fill="#000"/><path d="M9 19.500v-6h1v6z" fill="#4c4c10"/><path d="M9.500 1q3-.5 4.500 1.800q2 1 1.500 3.200q1.500 2 0 4q-.5 2.500-3 3q-2 1.600-4 .2q-2.800.3-3.500-2.200q-2-1.800-.8-4q-.5-2.500 1.800-3.500q1-2.300 3.500-2.500z" fill="#3c7410"/><g fill="#183c70"><rect x="7" y="3" width="1" height="1"/><rect x="11" y="4" width="1" height="1"/><rect x="9" y="7" width="1" height="1"/><rect x="13" y="8" width="1" height="1"/><rect x="6" y="9" width="1" height="1"/><rect x="10" y="11" width="1" height="1"/><rect x="12" y="6" width="1" height="1"/><rect x="8" y="12" width="1" height="1"/></g><g fill="#6ca010"><rect x="8" y="5" width="1" height="1"/><rect x="12" y="10" width="1" height="1"/><rect x="6" y="7" width="1" height="1"/><rect x="10" y="2" width="1" height="1"/><rect x="10" y="13" width="1" height="1"/></g></svg><span style="transform:scaleX(0.825)">tree</span></div>
<div class="it" style="top:253px"><svg width="20" height="20" viewBox="0 0 20 20" style="" ><rect width="20" height="20" fill="#000"/><path d="M9 19.500v-6h1v6z" fill="#4c4c10"/><path d="M9.500 1q3-.5 4.500 1.800q2 1 1.500 3.200q1.500 2 0 4q-.5 2.500-3 3q-2 1.600-4 .2q-2.800.3-3.500-2.200q-2-1.800-.8-4q-.5-2.500 1.800-3.500q1-2.300 3.500-2.500z" fill="#3c7410"/><g fill="#183c70"><rect x="7" y="3" width="1" height="1"/><rect x="11" y="4" width="1" height="1"/><rect x="9" y="7" width="1" height="1"/><rect x="13" y="8" width="1" height="1"/><rect x="6" y="9" width="1" height="1"/><rect x="10" y="11" width="1" height="1"/><rect x="12" y="6" width="1" height="1"/><rect x="8" y="12" width="1" height="1"/></g><g fill="#6ca010"><rect x="8" y="5" width="1" height="1"/><rect x="12" y="10" width="1" height="1"/><rect x="6" y="7" width="1" height="1"/><rect x="10" y="2" width="1" height="1"/><rect x="10" y="13" width="1" height="1"/></g></svg><span style="transform:scaleX(0.825)">tree</span></div>
<div class="it" style="top:276px"><svg width="20" height="20" viewBox="0 0 20 20" style="" ><rect width="20" height="20" fill="#000"/><path d="M9 19.500v-6h1v6z" fill="#4c4c10"/><path d="M9.500 1q3-.5 4.500 1.800q2 1 1.500 3.200q1.500 2 0 4q-.5 2.500-3 3q-2 1.600-4 .2q-2.800.3-3.500-2.200q-2-1.800-.8-4q-.5-2.500 1.800-3.500q1-2.300 3.500-2.500z" fill="#3c7410"/><g fill="#183c70"><rect x="7" y="3" width="1" height="1"/><rect x="11" y="4" width="1" height="1"/><rect x="9" y="7" width="1" height="1"/><rect x="13" y="8" width="1" height="1"/><rect x="6" y="9" width="1" height="1"/><rect x="10" y="11" width="1" height="1"/><rect x="12" y="6" width="1" height="1"/><rect x="8" y="12" width="1" height="1"/></g><g fill="#6ca010"><rect x="8" y="5" width="1" height="1"/><rect x="12" y="10" width="1" height="1"/><rect x="6" y="7" width="1" height="1"/><rect x="10" y="2" width="1" height="1"/><rect x="10" y="13" width="1" height="1"/></g></svg><span style="transform:scaleX(0.825)">tree</span></div>
<div class="it" style="top:299px"><svg width="20" height="20" viewBox="0 0 20 20" style="" ><rect width="20" height="20" fill="url(#gWat)"/><rect x="0" y="0" width="3" height="6" fill="#a01030"/><rect x="6" y="0" width="4" height="2" fill="#d0c020"/><rect x="13" y="0" width="4" height="2.500" fill="#c01818"/><circle cx="7.500" cy="4.500" r="3.300" fill="#3058c8"/><circle cx="8" cy="5.300" r="1.500" fill="#283060"/><polygon points="16.500,1.500 13.500,6.500 19,6.500" fill="#18b030"/><rect x="0" y="8.500" width="2.500" height="2.500" fill="#20a040"/><rect x="6.500" y="8" width="3" height="1.800" fill="#c8c850"/><path d="M0 15.500L9 9.500M2 19L13 12M9 19.500L18 12.500M0 12l5-3" stroke="#e8ecf0" stroke-width="1.300" opacity=".85"/><path d="M0 17.500L11 10.500M6 19.500L16 12.500" stroke="#404858" stroke-width="1" opacity=".6"/><rect width="20" height="20" fill="url(#nz)"/></svg><span style="transform:scaleX(0.837)">gl_water_sl_1</span></div>
<div class="it" style="top:322px"><svg width="20" height="20" viewBox="0 0 20 20" style="" ><rect width="20" height="20" fill="url(#gSky)"/><rect width="20" height="20" fill="url(#gCloud)"/><rect width="20" height="20" fill="url(#gSun)"/><rect width="20" height="12" fill="url(#nz)"/><path d="M0 20v-1.500l3-0.500l1.200-2l0.800-2.800l0.800 2.800l1.300 2l2.400.8l10.500.7v.5z" fill="#100804"/></svg><span style="transform:scaleX(0.855)">gl_poster_3</span></div>
<div class="it" style="top:345px"><svg width="20" height="20" viewBox="0 0 20 20" style="" ><rect width="20" height="20" fill="url(#gSky)"/><rect width="20" height="20" fill="url(#gCloud)"/><rect width="20" height="20" fill="url(#gSun)"/><rect width="20" height="12" fill="url(#nz)"/><path d="M0 20v-1.500l3-0.500l1.200-2l0.800-2.800l0.800 2.800l1.300 2l2.400.8l10.500.7v.5z" fill="#100804"/></svg><span style="transform:scaleX(0.845)">stone_border_r</span></div>
<div class="it" style="top:368px"><svg width="20" height="20" viewBox="0 0 20 20" style="" ><rect width="20" height="20" fill="url(#gSky)"/><rect width="20" height="20" fill="url(#gCloud)"/><rect width="20" height="20" fill="url(#gSun)"/><rect width="20" height="12" fill="url(#nz)"/><path d="M0 20v-1.500l3-0.500l1.200-2l0.800-2.800l0.800 2.800l1.300 2l2.400.8l10.500.7v.5z" fill="#100804"/></svg><span style="transform:scaleX(0.855)">gl_poster_3</span></div>
<div class="it" style="top:391px"><svg width="20" height="20" viewBox="0 0 20 20" style="" ><rect width="20" height="20" fill="url(#gSky)"/><rect width="20" height="20" fill="url(#gCloud)"/><rect width="20" height="20" fill="url(#gSun)"/><rect width="20" height="12" fill="url(#nz)"/><path d="M0 20v-1.500l3-0.500l1.200-2l0.800-2.800l0.800 2.800l1.300 2l2.400.8l10.500.7v.5z" fill="#100804"/></svg><span style="transform:scaleX(0.855)">gl_poster_2</span></div>
<div class="it" style="top:414px"><svg width="20" height="20" viewBox="0 0 20 20" style="" ><rect width="20" height="20" fill="url(#gWat)"/><rect x="0" y="0" width="3" height="6" fill="#a01030"/><rect x="6" y="0" width="4" height="2" fill="#d0c020"/><rect x="13" y="0" width="4" height="2.500" fill="#c01818"/><circle cx="7.500" cy="4.500" r="3.300" fill="#3058c8"/><circle cx="8" cy="5.300" r="1.500" fill="#283060"/><polygon points="16.500,1.500 13.500,6.500 19,6.500" fill="#18b030"/><rect x="0" y="8.500" width="2.500" height="2.500" fill="#20a040"/><rect x="6.500" y="8" width="3" height="1.800" fill="#c8c850"/><path d="M0 15.500L9 9.500M2 19L13 12M9 19.500L18 12.500M0 12l5-3" stroke="#e8ecf0" stroke-width="1.300" opacity=".85"/><path d="M0 17.500L11 10.500M6 19.500L16 12.500" stroke="#404858" stroke-width="1" opacity=".6"/><rect width="20" height="20" fill="url(#nz)"/></svg><span style="transform:scaleX(0.837)">gl_water_sl_1</span></div>
<div class="it" style="top:437px"><svg width="20" height="20" viewBox="0 0 20 20" style="" ><rect width="20" height="20" fill="#000"/><path d="M9 19.500v-6h1v6z" fill="#4c4c10"/><path d="M9.500 1q3-.5 4.500 1.800q2 1 1.500 3.200q1.500 2 0 4q-.5 2.500-3 3q-2 1.600-4 .2q-2.800.3-3.500-2.200q-2-1.800-.8-4q-.5-2.500 1.800-3.500q1-2.300 3.500-2.500z" fill="#3c7410"/><g fill="#183c70"><rect x="7" y="3" width="1" height="1"/><rect x="11" y="4" width="1" height="1"/><rect x="9" y="7" width="1" height="1"/><rect x="13" y="8" width="1" height="1"/><rect x="6" y="9" width="1" height="1"/><rect x="10" y="11" width="1" height="1"/><rect x="12" y="6" width="1" height="1"/><rect x="8" y="12" width="1" height="1"/></g><g fill="#6ca010"><rect x="8" y="5" width="1" height="1"/><rect x="12" y="10" width="1" height="1"/><rect x="6" y="7" width="1" height="1"/><rect x="10" y="2" width="1" height="1"/><rect x="10" y="13" width="1" height="1"/></g></svg><span style="transform:scaleX(0.825)">tree</span></div>
<div class="it" style="top:460px"><svg width="20" height="20" viewBox="0 0 20 20" style="" ><rect width="20" height="20" fill="#000"/><polygon points="4,7.800 1,18 8.500,18" fill="url(#gCone)"/><rect x="7" y="5.800" width="5.500" height="12" fill="url(#gCyl)"/><ellipse cx="9.750" cy="5.800" rx="2.750" ry="0.900" fill="#e4e4e8"/><circle cx="14.600" cy="13.600" r="4.300" fill="url(#gSph)"/></svg><span style="transform:scaleX(0.876)">gl_shape_Lavka</span></div>
<div class="it" style="top:483px"><svg width="20" height="20" viewBox="0 0 20 20" style="" ><rect width="20" height="20" fill="#000"/><polygon points="4,7.800 1,18 8.500,18" fill="url(#gCone)"/><rect x="7" y="5.800" width="5.500" height="12" fill="url(#gCyl)"/><ellipse cx="9.750" cy="5.800" rx="2.750" ry="0.900" fill="#e4e4e8"/><circle cx="14.600" cy="13.600" r="4.300" fill="url(#gSph)"/></svg><span style="transform:scaleX(0.854)">gl_shape_ZabradlIZadni</span></div>
<div class="it" style="top:506px"><svg width="20" height="20" viewBox="0 0 20 20" style="" ><rect width="20" height="20" fill="#000"/><polygon points="4,7.800 1,18 8.500,18" fill="url(#gCone)"/><rect x="7" y="5.800" width="5.500" height="12" fill="url(#gCyl)"/><ellipse cx="9.750" cy="5.800" rx="2.750" ry="0.900" fill="#e4e4e8"/><circle cx="14.600" cy="13.600" r="4.300" fill="url(#gSph)"/></svg><span style="transform:scaleX(0.838)">gl_shape_levyBrehPilire</span></div>
<div class="it" style="top:529px"><svg width="20" height="20" viewBox="0 0 20 20" style="" ><rect width="20" height="20" fill="#000"/><polygon points="4,7.800 1,18 8.500,18" fill="url(#gCone)"/><rect x="7" y="5.800" width="5.500" height="12" fill="url(#gCyl)"/><ellipse cx="9.750" cy="5.800" rx="2.750" ry="0.900" fill="#e4e4e8"/><circle cx="14.600" cy="13.600" r="4.300" fill="url(#gSph)"/></svg><span style="transform:scaleX(0.867)">gl_shape_MVEZaklady</span></div>
<div class="it" style="top:552px"><svg width="20" height="20" viewBox="0 0 20 20" style="" ><rect width="20" height="20" fill="#000"/><polygon points="4,7.800 1,18 8.500,18" fill="url(#gCone)"/><rect x="7" y="5.800" width="5.500" height="12" fill="url(#gCyl)"/><ellipse cx="9.750" cy="5.800" rx="2.750" ry="0.900" fill="#e4e4e8"/><circle cx="14.600" cy="13.600" r="4.300" fill="url(#gSph)"/></svg><span style="transform:scaleX(0.859)">gl_shape_Kancelar</span></div>
<div class="it" style="top:575px"><svg width="20" height="20" viewBox="0 0 20 20" style="" ><rect width="20" height="20" fill="#000"/><path d="M4 8.500q-3.500-1-3.500 1q0.500 2.500 4 2.500" fill="none" stroke="#a8a8b0" stroke-width="0.9"/><path d="M15 11l3.200-5.200l1 .3l-2.700 6.400z" fill="#b8b8c0"/><ellipse cx="9.500" cy="10.200" rx="6.300" ry="3.900" fill="url(#gTea)"/><path d="M7 6.800q2.500-1.300 5 0" stroke="#d0d0d8" stroke-width="0.8" fill="none"/><rect x="9" y="4.200" width="1" height="2" fill="#9090a0"/></svg><span style="transform:scaleX(0.837)">gl_model_Vez1</span></div>
<div class="it" style="top:598px"><svg width="20" height="20" viewBox="0 0 20 20" style="" ><rect width="20" height="20" fill="#000"/><path d="M4 8.500q-3.500-1-3.500 1q0.500 2.500 4 2.500" fill="none" stroke="#a8a8b0" stroke-width="0.9"/><path d="M15 11l3.200-5.200l1 .3l-2.700 6.400z" fill="#b8b8c0"/><ellipse cx="9.500" cy="10.200" rx="6.300" ry="3.900" fill="url(#gTea)"/><path d="M7 6.800q2.500-1.300 5 0" stroke="#d0d0d8" stroke-width="0.8" fill="none"/><rect x="9" y="4.200" width="1" height="2" fill="#9090a0"/></svg><span style="transform:scaleX(0.837)">gl_model_Vez2</span></div>
<div class="it" style="top:621px"><svg width="20" height="20" viewBox="0 0 20 20" style="" ><rect width="20" height="20" fill="#000"/><path d="M4 8.500q-3.500-1-3.500 1q0.500 2.500 4 2.500" fill="none" stroke="#a8a8b0" stroke-width="0.9"/><path d="M15 11l3.200-5.200l1 .3l-2.700 6.400z" fill="#b8b8c0"/><ellipse cx="9.500" cy="10.200" rx="6.300" ry="3.900" fill="url(#gTea)"/><path d="M7 6.800q2.500-1.300 5 0" stroke="#d0d0d8" stroke-width="0.8" fill="none"/><rect x="9" y="4.200" width="1" height="2" fill="#9090a0"/></svg><span style="transform:scaleX(0.837)">gl_model_Vez4</span></div>
<div class="it" style="top:644px"><svg width="20" height="20" viewBox="0 0 20 20" style="" ><rect width="20" height="20" fill="#000"/><polygon points="4,7.800 1,18 8.500,18" fill="url(#gCone)"/><rect x="7" y="5.800" width="5.500" height="12" fill="url(#gCyl)"/><ellipse cx="9.750" cy="5.800" rx="2.750" ry="0.900" fill="#e4e4e8"/><circle cx="14.600" cy="13.600" r="4.300" fill="url(#gSph)"/></svg><span style="transform:scaleX(0.862)">gl_shape_Strecha</span></div>
<div class="it" style="top:667px"><svg width="20" height="20" viewBox="0 0 20 20" style="" ><rect width="20" height="20" fill="#000"/><polygon points="4,7.800 1,18 8.500,18" fill="url(#gCone)"/><rect x="7" y="5.800" width="5.500" height="12" fill="url(#gCyl)"/><ellipse cx="9.750" cy="5.800" rx="2.750" ry="0.900" fill="#e4e4e8"/><circle cx="14.600" cy="13.600" r="4.300" fill="url(#gSph)"/></svg><span style="transform:scaleX(0.869)">gl_shape_Rozvodna</span></div>
<div class="it" style="top:690px"><svg width="20" height="20" viewBox="0 0 20 20" style="" ><rect width="20" height="20" fill="#000"/><polygon points="4,7.800 1,18 8.500,18" fill="url(#gCone)"/><rect x="7" y="5.800" width="5.500" height="12" fill="url(#gCyl)"/><ellipse cx="9.750" cy="5.800" rx="2.750" ry="0.900" fill="#e4e4e8"/><circle cx="14.600" cy="13.600" r="4.300" fill="url(#gSph)"/></svg><span style="transform:scaleX(0.845)">gl_shape_MVE</span></div>
<div class="it" style="top:713px"><svg width="20" height="20" viewBox="0 0 20 20" style="" ><rect width="20" height="20" fill="#000"/><polygon points="4,7.800 1,18 8.500,18" fill="url(#gCone)"/><rect x="7" y="5.800" width="5.500" height="12" fill="url(#gCyl)"/><ellipse cx="9.750" cy="5.800" rx="2.750" ry="0.900" fill="#e4e4e8"/><circle cx="14.600" cy="13.600" r="4.300" fill="url(#gSph)"/></svg><span style="transform:scaleX(0.867)">gl_shape_ZabradliPredni</span></div>
<div class="it" style="top:736px"><svg width="20" height="20" viewBox="0 0 20 20" style="" ><rect width="20" height="20" fill="#000"/><path d="M4 8.500q-3.500-1-3.500 1q0.500 2.500 4 2.500" fill="none" stroke="#a8a8b0" stroke-width="0.9"/><path d="M15 11l3.200-5.200l1 .3l-2.700 6.400z" fill="#b8b8c0"/><ellipse cx="9.500" cy="10.200" rx="6.300" ry="3.900" fill="url(#gTea)"/><path d="M7 6.800q2.500-1.300 5 0" stroke="#d0d0d8" stroke-width="0.8" fill="none"/><rect x="9" y="4.200" width="1" height="2" fill="#9090a0"/></svg><span style="transform:scaleX(0.837)">gl_model_Vez3</span></div>
<div class="it" style="top:759px"><svg width="20" height="20" viewBox="0 0 20 20" style="" ><rect width="20" height="20" fill="url(#gSky)"/><rect width="20" height="20" fill="url(#gCloud)"/><rect width="20" height="20" fill="url(#gSun)"/><rect width="20" height="12" fill="url(#nz)"/><path d="M0 20v-1.500l3-0.500l1.200-2l0.800-2.800l0.800 2.800l1.300 2l2.400.8l10.500.7v.5z" fill="#100804"/></svg><span style="transform:scaleX(0.846)">gl_poster_JP3</span></div>
<div class="it" style="top:782px"><svg width="20" height="20" viewBox="0 0 20 20" style="" ><rect width="20" height="20" fill="url(#gSky)"/><rect width="20" height="20" fill="url(#gCloud)"/><rect width="20" height="20" fill="url(#gSun)"/><rect width="20" height="12" fill="url(#nz)"/><path d="M0 20v-1.500l3-0.500l1.200-2l0.800-2.800l0.800 2.800l1.300 2l2.400.8l10.500.7v.5z" fill="#100804"/></svg><span style="transform:scaleX(0.846)">gl_poster_JP2</span></div>
<div class="it" style="top:805px"><svg width="20" height="20" viewBox="0 0 20 20" style="" ><rect width="20" height="20" fill="url(#gSky)"/><rect width="20" height="20" fill="url(#gCloud)"/><rect width="20" height="20" fill="url(#gSun)"/><rect width="20" height="12" fill="url(#nz)"/><path d="M0 20v-1.500l3-0.500l1.200-2l0.800-2.800l0.800 2.800l1.300 2l2.400.8l10.500.7v.5z" fill="#100804"/></svg><span style="transform:scaleX(0.839)">gl_poster_JP1</span></div>
</div>
<svg width="152" height="16" viewBox="8 914 152 16" style="position:absolute;left:8px;top:914px" shape-rendering="crispEdges"><defs><pattern id="dith2" width="2" height="2" patternUnits="userSpaceOnUse"><rect width="2" height="2" fill="#d4d0c8"/><rect width="1" height="1" fill="#808080"/><rect x="1" y="1" width="1" height="1" fill="#808080"/></pattern></defs><rect x="8" y="914" width="152" height="16" fill="#d4d0c8"/><rect x="127" y="914" width="16" height="16" fill="url(#dith2)"/><rect x="8" y="914" width="16" height="16" fill="#d4d0c8"/><path d="M9 915.500h13M9.5 915v13" stroke="#fff" stroke-width="1" fill="none"/><path d="M9 928.500h14M22.5 915v14" stroke="#808080" stroke-width="1" fill="none"/><path d="M8 929.500h16M23.5 914v16" stroke="#000" stroke-width="1" fill="none"/><rect x="24" y="914" width="103" height="16" fill="#d4d0c8"/><path d="M25 915.500h100M25.5 915v13" stroke="#fff" stroke-width="1" fill="none"/><path d="M25 928.500h101M125.5 915v14" stroke="#808080" stroke-width="1" fill="none"/><path d="M24 929.500h103M126.5 914v16" stroke="#000" stroke-width="1" fill="none"/><rect x="143" y="914" width="16" height="16" fill="#d4d0c8"/><path d="M144 915.500h13M144.5 915v13" stroke="#fff" stroke-width="1" fill="none"/><path d="M144 928.500h14M157.5 915v14" stroke="#808080" stroke-width="1" fill="none"/><path d="M143 929.500h16M158.5 914v16" stroke="#000" stroke-width="1" fill="none"/><polygon points="18,918 18,926 14,922" fill="#fff" transform="translate(1,1)"/><polygon points="18,918 18,926 14,922" fill="#808080"/><polygon points="149,918 149,926 153,922" fill="#000"/></svg>
<div class="a" style="left:6px;top:932px;width:155px;height:262px;background:linear-gradient(180deg,#aca8a0 0%,#b6b2aa 35%,#c4c0b8 70%,#ccc8c0 100%)"></div>
<div class="hd" style="top:935px;transform:scaleX(1.121)">translate</div>
<div class="lbl" style="top:954.7px">X:</div>
<div class="fld" style="top:952px"><span>0</span></div>
<div class="lbl" style="top:974.7px">Y:</div>
<div class="fld" style="top:972px"><span>0</span></div>
<div class="lbl" style="top:994.7px">Z:</div>
<div class="fld" style="top:992px"><span>0</span></div>
<div class="hd" style="top:1015px;transform:scaleX(1.158)">rotate</div>
<div class="lbl" style="top:1034.7px">A:</div>
<div class="fld" style="top:1032px"><span>0</span></div>
<div class="lbl" style="top:1054.7px">X:</div>
<div class="fld" style="top:1052px"><span>0</span></div>
<div class="lbl" style="top:1074.7px">Y:</div>
<div class="fld" style="top:1072px"><span>1</span></div>
<div class="lbl" style="top:1094.7px">Z:</div>
<div class="fld" style="top:1092px"><span>0</span></div>
<div class="hd" style="top:1115px;transform:scaleX(1.021)">scale</div>
<div class="lbl" style="top:1134.7px">X:</div>
<div class="fld" style="top:1132px"><span>1</span></div>
<div class="lbl" style="top:1154.7px">Y:</div>
<div class="fld" style="top:1152px"><span>1</span></div>
<div class="lbl" style="top:1174.7px">Z:</div>
<div class="fld" style="top:1172px"><span>1</span></div>
<div class="a" style="left:165px;top:49px;width:1431px;height:1147px;border:1px solid;border-color:#808080 #fff #fff #808080;"></div>
<div class="a" style="left:166px;top:50px;width:1428px;height:1px;background:#000"></div>
<div class="a" style="left:166px;top:50px;width:1px;height:1144px;background:#000"></div>
<svg width="1427" height="26" viewBox="167 51 1427 26" style="position:absolute;left:167px;top:51px" shape-rendering="geometricPrecision"><rect x="248" y="53" width="1" height="22" fill="#808080"/><rect x="249" y="53" width="1" height="22" fill="#fff"/><rect x="309" y="53" width="1" height="22" fill="#808080"/><rect x="310" y="53" width="1" height="22" fill="#fff"/><rect x="171" y="54" width="20" height="20" fill="#000"/><polygon points="174,59.5 177,56.5 188,56.5 185,59.5" fill="#d8a010" stroke="#d8a010" stroke-width="0.5" stroke-linejoin="round"/><polygon points="185,59.5 188,56.5 188,67.5 185,70.5" fill="#d8a010" stroke="#d8a010" stroke-width="0.5" stroke-linejoin="round"/><rect x="174" y="59.5" width="11" height="11" fill="#ffd24c" stroke="#d8a010" stroke-width="0.5"/><polygon points="198,59.5 201.5,56 213.5,56 210,59.5" fill="#d8a010" stroke="#d8a010" stroke-width="0.5" stroke-linejoin="round"/><polygon points="210,59.5 213.5,56 213.5,68 210,71.5" fill="#d8a010" stroke="#d8a010" stroke-width="0.5" stroke-linejoin="round"/><rect x="198" y="59.5" width="12" height="12" fill="#ffd24c" stroke="#d8a010" stroke-width="0.5"/><rect x="219" y="52" width="24" height="24" fill="url(#dith)"/><path d="M219 52.5h24M219.5 52v24" stroke="#808080" stroke-width="1" fill="none"/><path d="M219 75.5h24M242.5 52v24" stroke="#fff" stroke-width="1" fill="none"/><g fill="none" stroke="#707070" stroke-width="1"><rect x="224.500" y="60.500" width="11" height="11" rx="1"/><path d="M227 60.500l2.500-3h9.500q1 0 1 1v9.500l-3.500 3"/></g><g shape-rendering="crispEdges"><rect x="257" y="55" width="10" height="9" fill="#b8b8b8"/><rect x="267" y="55" width="10" height="9" fill="#808080"/><rect x="257" y="64" width="10" height="9" fill="#808080"/><rect x="267" y="64" width="10" height="9" fill="#b8b8b8"/></g><rect x="280" y="52" width="24" height="24" fill="url(#dith)"/><path d="M280 52.5h24M280.5 52v24" stroke="#808080" stroke-width="1" fill="none"/><path d="M280 75.5h24M303.5 52v24" stroke="#fff" stroke-width="1" fill="none"/><g shape-rendering="crispEdges" stroke="#000" fill="none"><rect x="283.500" y="55.500" width="18" height="18" stroke-width="1"/><path d="M292.500 55v19M283 64.500h19" stroke-width="1.5"/><path d="M286.500 56v18M289.500 56v18M295.500 56v18M298.500 56v18M284 58.500h18M284 61.500h18M284 67.500h18M284 70.500h18" stroke="#000" stroke-width="1" opacity="0.55"/></g><path d="M325.500 62q-5.500-2.500-5.500 3.500q0 6.500 5.500 4.500" stroke="#ffe48c" stroke-width="4.4" fill="none" stroke-linecap="round"/><polygon points="323.500,59.500 328,62 323.500,64.500" fill="#ffe48c" stroke="#ffe48c" stroke-width="2" stroke-linejoin="round"/><path d="M325.500 62q-5.500-2.500-5.500 3.500q0 6.500 5.500 4.500" stroke="#5c5c64" stroke-width="2.4" fill="none"/><polygon points="323.500,59.500 328,62 323.500,64.500" fill="#5c5c64"/><polygon points="323.500,68 328,70.500 323.500,73" fill="#5c5c64" stroke="#ffe48c" stroke-width="1"/><text x="327.5" y="63" font-family="Liberation Sans,sans-serif" font-size="9" font-weight="bold" fill="#000" textLength="4.6" lengthAdjust="spacingAndGlyphs" style="filter:grayscale(1)">0</text><text x="337.5" y="63.5" font-family="Liberation Sans,sans-serif" font-size="9" font-weight="bold" fill="#000" textLength="4.6" lengthAdjust="spacingAndGlyphs" style="filter:grayscale(1)">0</text><text x="347.5" y="64.5" font-family="Liberation Sans,sans-serif" font-size="9" font-weight="bold" fill="#000" textLength="4.6" lengthAdjust="spacingAndGlyphs" style="filter:grayscale(1)">0</text><path d="M331 68q0 4 5 4q5 0 5-4" stroke="#ffe48c" stroke-width="4.2" fill="none" stroke-linecap="round"/><polygon points="329,69 333,69 331,65.500" fill="#ffe48c" stroke="#ffe48c" stroke-width="2" stroke-linejoin="round"/><path d="M331 68q0 4 5 4q5 0 5-4" stroke="#5c5c64" stroke-width="2.2" fill="none"/><polygon points="329,69 333,69 331,65.500" fill="#5c5c64"/><polygon points="339,69 343,69 341,65.500" fill="#5c5c64" stroke="#ffe48c" stroke-width="1"/><path d="M345.5 70.5L355.0 70.5M355.0 70.5L352.7 72.8L352.7 68.2ZM345.5 70.5L347.8 72.8L347.8 68.2Z" stroke="#ffe48c" stroke-width="3.3" fill="#ffe48c" stroke-linejoin="round"/><path d="M345.5 70.5L355.0 70.5" stroke="#5c5c64" stroke-width="1.3" fill="none"/><path d="M355.0 70.5L352.7 72.8L352.7 68.2ZM345.5 70.5L347.8 72.8L347.8 68.2Z" fill="#5c5c64"/><g fill="#ffe48c" stroke="#ffe48c" stroke-width="2.200" stroke-linejoin="round"><circle cx="362.500" cy="58.500" r="3.600"/><circle cx="372" cy="58.500" r="3.600"/><rect x="361" y="62" width="11" height="7"/><polygon points="361,64 357,62 357,69 361,67.500"/><path d="M366.500 68l-6.500 6M366.500 68l7.500 6" stroke-width="1.600" fill="none"/></g><g fill="#5c5c64" stroke="#5c5c64" stroke-width="0.500"><circle cx="362.500" cy="58.500" r="3.600"/><circle cx="372" cy="58.500" r="3.600"/><rect x="361" y="62" width="11" height="7"/><polygon points="361,64 357,62 357,69 361,67.500"/><path d="M366.500 68l-6.500 6M366.500 68l7.500 6" stroke-width="1.600" fill="none"/></g><circle cx="362.500" cy="58.500" r="1.200" fill="#a0a0a0"/><circle cx="372" cy="58.500" r="1.200" fill="#a0a0a0"/><g shape-rendering="crispEdges"><rect x="1572.500" y="56.500" width="15" height="15" fill="#d4d0c8" stroke="#404040"/><rect x="1572" y="56" width="16" height="4" fill="#404040"/></g></svg>
<div class="a" style="left:167px;top:77px;width:1427px;height:1117px;background:#808080;overflow:hidden">
<svg width="1427" height="1117" viewBox="167 77 1427 1117" style="position:absolute;left:0;top:0" shape-rendering="crispEdges"><path d="M545.0 754.4L-670.7 1435.2M565.3 754.5L-589.1 1437.4M585.6 754.6L-507.0 1439.6M605.9 754.7L-424.5 1441.9M626.3 754.8L-341.6 1444.2M646.7 754.9L-258.3 1446.4M667.1 755.0L-174.5 1448.7M687.5 755.2L-90.2 1451.0M708.0 755.3L-5.6 1453.4M728.5 755.4L79.6 1455.7M769.5 755.6L251.2 1460.4M790.1 755.7L337.7 1462.8M810.7 755.8L424.7 1465.1M831.3 755.9L512.1 1467.5M852.0 756.1L600.0 1469.9M872.6 756.2L688.4 1472.3M893.3 756.3L777.2 1474.8M914.1 756.4L866.5 1477.2M934.8 756.5L956.4 1479.7M976.4 756.7L1137.5 1484.6M997.2 756.9L1228.8 1487.1M1018.1 757.0L1320.6 1489.6M1038.9 757.1L1412.9 1492.2M1059.9 757.2L1505.7 1494.7M1080.8 757.3L1599.1 1497.3M1101.7 757.4L1693.0 1499.8M1122.7 757.5L1787.3 1502.4M1143.7 757.7L1882.3 1505.0M1185.8 757.9L2073.7 1510.3M1206.9 758.0L2170.2 1512.9M1228.1 758.1L2267.3 1515.6M1249.2 758.2L2364.9 1518.2M1270.4 758.4L2463.1 1520.9M1291.6 758.5L2561.9 1523.6M1312.8 758.6L2661.2 1526.3M1334.1 758.7L2761.0 1529.1M1355.3 758.8L2861.5 1531.8M1398.0 759.1L3064.2 1537.4M1419.3 759.2L3166.4 1540.2M1440.7 759.3L3269.2 1543.0M1462.1 759.4L3372.6 1545.8M1483.6 759.5L3476.6 1548.6M1505.1 759.6L3581.2 1551.5M1526.6 759.8L3686.5 1554.4M1548.1 759.9L3792.3 1557.3M1569.6 760.0L3898.8 1560.2M1612.8 760.2L4113.7 1566.1M1634.5 760.4L4222.2 1569.0M1656.1 760.5L4331.2 1572.0M1677.8 760.6L4440.9 1575.0M1699.5 760.7L4551.3 1578.1M1721.3 760.8L4662.4 1581.1M1743.1 761.0L4774.1 1584.1M1764.9 761.1L4886.5 1587.2M1786.7 761.2L4999.6 1590.3M1830.5 761.4L5227.9 1596.6M1852.4 761.6L5343.1 1599.7M1874.3 761.7L5459.0 1602.9M1896.3 761.8L5575.6 1606.1M1918.3 761.9L5693.0 1609.3M1940.3 762.0L5811.1 1612.5M1962.4 762.2L5929.9 1615.8M1984.5 762.3L6049.5 1619.0M2006.6 762.4L6169.8 1622.3M545.0 754.4L2028.7 762.5M539.1 757.7L2046.5 766.1M533.0 761.1L2064.9 769.8M526.7 764.6L2083.8 773.7M520.2 768.3L2103.5 777.7M513.4 772.0L2123.7 781.8M506.5 775.9L2144.8 786.0M499.3 779.9L2166.5 790.4M491.9 784.1L2189.1 795.0M484.2 788.4L2212.4 799.7M468.0 797.5L2261.9 809.7M459.4 802.3L2288.1 815.1M450.5 807.3L2315.4 820.6M441.3 812.4L2343.7 826.3M431.7 817.8L2373.3 832.3M421.7 823.4L2404.1 838.5M411.3 829.2L2436.2 845.0M400.5 835.3L2469.8 851.8M389.2 841.6L2504.9 859.0M365.1 855.1L2580.1 874.2M352.3 862.3L2620.5 882.4M338.8 869.8L2662.9 891.0M324.7 877.7L2707.5 900.0M309.9 886.0L2754.4 909.5M294.3 894.7L2803.9 919.5M278.0 903.9L2856.1 930.1M260.8 913.5L2911.3 941.3M242.6 923.7L2969.8 953.1M203.2 945.8L3097.8 979.0M181.7 957.8L3168.0 993.2M158.9 970.6L3242.9 1008.4M134.7 984.1L3322.9 1024.6M108.9 998.6L3408.7 1042.0M81.3 1014.0L3500.9 1060.7M51.9 1030.5L3600.2 1080.8M20.3 1048.2L3707.4 1102.5M-13.6 1067.2L3823.7 1126.0M-89.6 1109.8L4088.0 1179.5M-132.5 1133.7L4239.1 1210.1M-179.1 1159.8L4405.4 1243.8M-229.9 1188.3L4589.3 1281.1M-285.7 1219.6L4793.7 1322.5M-347.1 1254.0L5022.3 1368.8M-415.1 1292.0L5279.6 1420.9M-490.7 1334.4L5571.5 1480.0M-575.3 1381.8L5905.3 1547.6" stroke="#606060" stroke-width="1" fill="none"/><path d="M749.0 755.5L165.2 1458.0M955.6 756.6L1046.7 1482.2M1164.8 757.8L1977.7 1507.6M1376.6 758.9L2962.5 1534.6M1591.2 760.1L4006.0 1563.1M1808.6 761.3L5113.4 1593.4M2028.7 762.5L6290.9 1625.7M476.2 792.9L2236.7 804.6M377.5 848.2L2541.6 866.4M223.4 934.4L3031.9 965.7M-50.1 1087.6L3950.1 1151.6M-670.7 1435.2L6290.9 1625.7" stroke="#2a2a2a" stroke-width="1" fill="none"/><path d="M167.0 542.8L700.0 543.3" stroke="#303030" stroke-width="1" fill="none" opacity="0.7" stroke-dasharray="14 9 6 5 18 12"/><path d="M172.0 542.8L700.0 543.3" stroke="#d8d8d8" stroke-width="1" fill="none" opacity="0.55" stroke-dasharray="6 9 3 20 12 14" stroke-dashoffset="-14"/><g shape-rendering="geometricPrecision"><path d="M279.7 77.0L244.5 206.0L292.5 376.0L412.0 399.0M297.0 77.0L256.5 204.5L303.8 370.0L414.0 398.0M244.5 209.0L289.5 257.0L330.0 330.0M256.5 204.5L300.0 257.0L371.0 387.0L413.0 399.0M337.5 77.0L370.5 201.5L381.0 257.0L414.0 398.0M355.5 77.0L343.5 192.5L351.0 257.0L371.0 387.0M364.5 77.0L354.0 257.0L413.0 398.0M375.7 77.0L397.5 257.0L414.5 398.0M343.5 192.5L364.5 257.0L413.0 398.0M448.5 77.0L451.5 86.0L441.0 257.0L417.0 398.0M472.5 77.0L480.0 137.0L470.0 250.0L418.0 398.0M395.0 77.0L405.0 180.0L414.0 398.0M425.0 77.0L420.0 200.0L416.0 398.0M519.4 77.0L560.0 176.0L592.8 198.0L622.5 326.0L611.6 398.0L516.0 440.0M535.0 77.0L558.0 172.0L569.0 207.0L600.0 240.0L621.0 325.0M572.5 240.0L593.8 340.0L586.0 385.0L514.0 440.0M621.0 325.0L561.0 272.5M344.0 195.0L350.6 264.0L371.0 387.5M420.0 400.0L431.0 426.0L509.0 440.0M440.0 400.0L446.0 422.0L509.0 439.0M586.0 385.0L575.0 300.0L569.0 207.0M592.0 199.0L616.0 310.0M530.5 130.0L556.0 254.5M548.5 130.0L569.5 208.0L580.0 310.0M502.0 130.0L460.0 262.0M478.0 130.0L487.0 310.0M454.0 130.0L463.0 265.0M415.5 398.0L244.5 206.0M415.5 398.0L256.5 204.5M415.5 398.0L292.5 376.0M415.5 398.0L303.8 370.0M415.5 398.0L305.5 282.5M415.5 398.0L353.8 365.0M415.5 398.0L344.0 195.0M415.5 398.0L350.6 264.0M415.5 398.0L372.5 201.3M415.5 398.0L374.0 254.4M415.5 398.0L452.5 301.3M415.5 398.0L472.5 253.8M415.5 398.0L433.4 273.0M415.5 398.0L466.3 326.3M415.5 398.0L442.8 310.6M415.5 398.0L400.0 257.5M415.5 398.0L424.0 290.3M415.5 398.0L391.0 261.0M415.5 398.0L439.0 197.0M415.5 398.0L456.0 224.0M415.5 398.0L480.0 245.0M415.5 398.0L496.0 354.0M415.5 398.0L462.0 364.0M415.5 398.0L450.0 312.0M415.5 398.0L330.0 330.0M415.5 398.0L371.0 300.0M415.5 398.0L385.0 330.0M415.5 398.0L520.0 300.0M415.5 398.0L540.0 330.0M415.5 398.0L560.0 272.0M415.5 398.0L500.0 380.0M415.5 398.0L480.0 395.0M415.5 398.0L545.0 380.0M511.5 440.0L450.0 312.5M511.5 440.0L462.5 363.8M511.5 440.0L442.8 310.6M511.5 440.0L431.0 426.0M511.5 440.0L446.0 422.0M511.5 440.0L466.3 326.3M511.5 440.0L496.0 354.4M511.5 440.0L497.5 353.8M511.5 440.0L512.5 303.8M511.5 440.0L522.5 341.9M511.5 440.0L537.5 355.0M511.5 440.0L560.0 315.0M511.5 440.0L568.8 367.5M511.5 440.0L580.0 333.8M511.5 440.0L593.8 340.0M511.5 440.0L586.0 385.0M511.5 440.0L611.6 398.0M511.5 440.0L622.5 326.0M511.5 440.0L561.0 272.5M511.5 440.0L556.9 254.4M511.5 440.0L517.8 273.0M511.5 440.0L506.9 249.7M511.5 440.0L480.0 330.0M511.5 440.0L475.0 380.0M511.5 440.0L530.0 270.0M511.5 440.0L545.0 300.0M511.5 440.0L600.0 300.0M511.5 440.0L470.0 290.0M511.5 440.0L488.0 262.0M511.5 440.0L540.0 240.0M511.5 440.0L575.0 360.0M511.5 440.0L600.0 370.0" stroke="#dcdcdc" stroke-width="1" fill="none" opacity="0.55" /><path d="M407.2 77.0L412.5 257.0L415.5 398.0M370.5 201.5L417.0 200.0L480.0 221.0M370.5 201.5L480.0 245.0M370.5 201.5L465.0 212.7M413.2 137.0L480.0 155.0L525.6 167.0L569.0 207.5M413.2 137.0L456.0 224.0M373.5 257.0L439.5 197.0L480.0 195.5M396.0 257.0L480.0 182.0M405.0 252.5L480.0 212.0M439.5 162.5L480.0 163.0L433.5 257.0M439.5 162.5L433.5 257.0M508.8 338.8L580.0 333.8M505.3 162.2L511.6 440.0M400.0 145.0L446.5 130.0M413.5 136.7L454.0 194.5L524.5 166.0M451.0 152.5L505.0 162.2L439.0 162.2L436.0 220.0M451.0 152.5L445.0 235.0M469.0 173.5L505.0 162.2L526.0 167.5L556.0 254.5L508.0 226.0M469.0 173.5L466.0 244.0M454.0 194.5L505.0 194.5L437.5 238.0M400.0 200.5L416.5 199.7L523.0 228.2L488.5 275.5L475.0 265.0M400.0 207.2L505.0 226.0M439.0 197.5L400.0 253.0M400.0 221.5L493.0 250.0L424.0 291.2L436.0 266.5L457.0 262.0M400.0 255.2L505.0 235.0L517.0 272.5L424.0 291.2M412.0 250.0L505.0 254.5L472.0 310.0M562.0 182.5L592.0 199.0L565.0 289.0M511.0 259.0L562.0 270.2L599.5 310.0M571.0 241.0L505.0 310.0M557.5 254.5L514.0 301.0M400.0 295.0L452.5 304.0L418.0 227.5M400.0 214.0L449.5 310.0" stroke="#e4e4e4" stroke-width="1" fill="none" opacity="0.75" /><path d="M296.2 109.2L408.0 103.2L364.5 158.0ZM296.2 109.2L256.5 204.5L453.0 127.2M309.0 130.2L453.0 128.0M309.0 130.2L348.0 164.0M309.0 130.2L405.0 120.5L453.0 127.2M305.5 282.5L400.0 257.5L472.5 253.8M305.5 282.5L452.5 301.3L353.8 365.0L305.5 282.5M400.0 257.5L452.5 301.3M372.5 201.3L503.8 193.4M374.0 254.4L410.0 213.8L522.5 229.4L424.0 290.3M374.0 254.4L506.9 249.7M391.3 260.6L510.0 237.2M433.4 273.0L517.8 273.0L466.3 326.3ZM442.8 310.6L560.0 315.3L496.0 354.4ZM461.6 365.3L567.8 366.9L522.5 341.9ZM462.5 363.8L537.5 355.0L568.8 367.5M497.5 353.8L560.0 315.0L512.5 303.8L450.0 312.5M510.0 259.0L622.5 326.3M500.6 187.2L569.4 207.5L556.9 254.4ZM450.6 152.8L525.6 166.9M413.5 136.7L524.5 166.0L562.0 182.5L569.5 208.0L565.0 241.0L499.0 190.0L505.0 185.5L569.5 208.0" stroke="#f2f2f2" stroke-width="1" fill="none" opacity="0.95" /><path d="M240.0 109.3L289.5 77.0" stroke="#f4f4f4" stroke-width="1.5" fill="none" opacity="0.95" /><path d="M415.5 386.0L412.5 408.0L410.7 471.5L411.0 545.0M415.5 392.0L414.3 471.5L414.0 545.0" stroke="#c8a070" stroke-width="1.2" fill="none" opacity="0.95" /><path d="M416.5 398.0L418.5 471.5L420.6 545.0M417.5 402.0L420.9 471.5L423.0 545.0M413.7 404.0L417.9 491.5L415.8 545.0M410.7 471.5L420.9 471.5M420.9 471.5L414.6 545.0" stroke="#3c3c3c" stroke-width="1" fill="none" opacity="0.8" /><path d="M511.5 428.0L509.2 450.0L507.9 491.5L507.5 543.0M511.5 434.0L510.6 491.5L509.8 543.0" stroke="#c8a070" stroke-width="1.2" fill="none" opacity="0.95" /><path d="M512.5 440.0L513.8 491.5L514.7 543.0M513.5 444.0L515.5 491.5L516.5 543.0M510.1 446.0L513.3 511.5L511.1 543.0M507.9 491.5L515.5 491.5M515.5 491.5L510.2 543.0" stroke="#3c3c3c" stroke-width="1" fill="none" opacity="0.8" /></g><g shape-rendering="geometricPrecision"><path d="M679.5 555.5L831.3 555.5L831.3 636.5L679.5 637.0ZM627.5 560.0L679.5 555.5" stroke="#66664c" stroke-width="1.1" fill="none" /><path d="M627.5 560.0L628.8 657.0L810.8 657.0M810.8 560.3L810.8 657.0L831.3 636.5M810.8 560.3L827.3 555.8M628.8 657.0L679.5 637.0M627.5 560.0L679.0 557.0" stroke="#34342c" stroke-width="1.1" fill="none" /><path d="M1594.0 543.8L1429.7 543.8L1429.7 627.1L1590.0 627.1M1522.8 543.8L1520.6 642.4L1594.0 642.4M1429.7 627.1L1520.6 642.4M1590.5 543.8L1589.5 627.1" stroke="#66664c" stroke-width="1.1" fill="none" /></g><g shape-rendering="geometricPrecision"><path d="M720.0 347.1L722.9 358.6M714.3 363.0L807.1 385.0M754.9 382.4L755.5 431.3M815.8 425.3L752.1 458.6M789.2 455.6L724.6 483.7M748.0 480.0L762.9 485.7M748.0 480.0L728.4 459.9M744.0 338.5L724.7 342.3L722.9 358.6L807.1 385.0L755.5 431.3L752.1 458.6L724.6 483.7L748.0 480.0M724.7 342.3L768.7 359.5M722.9 358.6L810.7 396.7M807.1 385.0L711.9 432.4M755.5 431.3L728.4 459.9M752.1 458.6L718.6 468.4M748.0 480.0L724.6 483.7M748.0 480.0L699.0 449.7M744.0 338.5L738.7 343.1L768.7 359.5L810.7 396.7L711.9 432.4L728.4 459.9L718.6 468.4L748.0 480.0M738.7 343.1L786.7 362.3M768.7 359.5L757.4 399.2M810.7 396.7L696.7 420.9M711.9 432.4L699.0 449.7M728.4 459.9L726.5 465.2M748.0 480.0L718.6 468.4M748.0 480.0L724.8 441.6M749.7 341.2L787.0 374.2M786.7 362.3L719.1 401.1M757.4 399.2L715.2 418.8M696.7 420.9L724.8 441.6M699.0 449.7L775.0 471.7M748.0 480.0L786.7 362.3M748.0 480.0L745.9 351.1M744.0 338.5L758.4 345.3L787.0 374.2L719.1 401.1L715.2 418.8L724.8 441.6L775.0 471.7L748.0 480.0M758.4 345.3L743.0 371.8M787.0 374.2L705.8 403.8M719.1 401.1L776.0 408.9M715.2 418.8L784.2 437.5M724.8 441.6L792.4 469.7M748.0 480.0L715.2 418.8M748.0 480.0L724.2 385.1M744.0 338.5L745.9 351.1L743.0 371.8L705.8 403.8L776.0 408.9L784.2 437.5L792.4 469.7L748.0 480.0M745.9 351.1L725.0 366.7M743.0 371.8L724.2 385.1M705.8 403.8L819.3 423.2M776.0 408.9L815.1 451.4M784.2 437.5L780.0 475.5M748.0 480.0L705.8 403.8M748.0 480.0L714.3 363.0M733.4 347.1L714.3 363.0M725.0 366.7L754.9 382.4M724.2 385.1L815.8 425.3M819.3 423.2L789.2 455.6M815.1 451.4L762.9 485.7M748.0 480.0L724.2 385.1M748.0 480.0L722.9 358.6" stroke="#dcdcdc" stroke-width="1" fill="none" opacity="0.38" /><path d="M744.0 338.5L720.0 347.1L714.3 363.0L754.9 382.4L815.8 425.3L789.2 455.6L762.9 485.7L748.0 480.0M744.0 338.5L749.7 341.2L786.7 362.3L757.4 399.2L696.7 420.9L699.0 449.7L726.5 465.2L748.0 480.0M744.0 338.5L733.4 347.1L725.0 366.7L724.2 385.1L819.3 423.2L815.1 451.4L780.0 475.5L748.0 480.0M720.0 347.1L724.7 342.3L738.7 343.1L749.7 341.2L758.4 345.3L745.9 351.1L733.4 347.1ZM720.0 347.1L749.7 341.2M714.3 363.0L786.7 362.3M754.9 382.4L807.1 385.0L810.7 396.7L757.4 399.2L719.1 401.1L705.8 403.8L724.2 385.1ZM754.9 382.4L757.4 399.2M815.8 425.3L696.7 420.9M789.2 455.6L752.1 458.6L728.4 459.9L699.0 449.7L724.8 441.6L784.2 437.5L815.1 451.4ZM789.2 455.6L699.0 449.7M762.9 485.7L726.5 465.2M744.0 338.5L748.0 480.0" stroke="#e4e4e4" stroke-width="1" fill="none" opacity="0.55" /><path d="M714.3 363.0L722.9 358.6L768.7 359.5L786.7 362.3L787.0 374.2L743.0 371.8L725.0 366.7ZM815.8 425.3L755.5 431.3L711.9 432.4L696.7 420.9L715.2 418.8L776.0 408.9L819.3 423.2ZM762.9 485.7L724.6 483.7L718.6 468.4L726.5 465.2L775.0 471.7L792.4 469.7L780.0 475.5Z" stroke="#f2f2f2" stroke-width="1" fill="none" opacity="0.8" /><path d="M732.8 359.6L746.5 357.5M699.8 389.8L716.3 385.0L758.9 390.5L768.6 397.4M735.5 401.5L760.3 398.8M745.2 418.0L761.7 411.2L787.8 422.2L780.9 424.9L745.2 423.5M746.5 424.9L785.1 431.8M765.8 437.3L789.2 444.2L798.8 446.9M768.6 445.5L793.3 453.8" stroke="#f2f2f2" stroke-width="1" fill="none" opacity="0.9" /><path d="M719.7 338.9L743.1 338.3L791.9 358.2L818.1 440.0L812.6 477.9L789.2 488.2M719.7 338.9L690.2 415.3L702.5 474.4L716.3 481.3M714.9 342.4L746.5 341.7L790.6 361.6L807.1 394.6L808.4 418.0M714.9 342.4L709.4 361.6L691.5 412.5M743.1 338.3L743.8 474.4M748.6 339.6L749.3 474.4" stroke="#dcdcdc" stroke-width="1" fill="none" opacity="0.6" /><path d="M745.1 407.0L782.0 422.6M758.6 421.5L754.9 450.6M786.5 451.6L766.4 458.6M742.9 459.6L778.8 484.5M771.0 489.0L758.6 421.5M771.0 489.0L770.5 404.7M766.0 402.0L749.8 404.8L782.0 422.6L754.9 450.6L766.4 458.6L778.8 484.5L771.0 489.0M749.8 404.8L797.4 429.3M782.0 422.6L736.9 450.8M754.9 450.6L790.5 458.0M766.4 458.6L758.5 483.7M771.0 489.0L782.0 422.6M771.0 489.0L778.8 406.1M766.0 402.0L770.5 404.7L797.4 429.3L736.9 450.8L790.5 458.0L758.5 483.7L771.0 489.0M770.5 404.7L776.5 430.4M797.4 429.3L765.3 435.6M736.9 450.8L804.5 466.6M790.5 458.0L756.8 480.3M771.0 489.0L736.9 450.8M771.0 489.0L759.4 431.7M778.8 406.1L759.4 431.7M776.5 430.4L792.9 438.9M765.3 435.6L797.0 467.3M804.5 466.6L774.2 475.6M771.0 489.0L776.5 430.4M771.0 489.0L759.5 410.8M766.0 402.0L771.2 412.2L759.4 431.7L792.9 438.9L797.0 467.3L774.2 475.6L771.0 489.0M771.2 412.2L739.9 422.1M759.4 431.7L807.1 442.6M792.9 438.9L761.1 472.0M797.0 467.3L789.7 476.7M771.0 489.0L797.0 467.3M771.0 489.0L786.5 451.6M766.0 402.0L759.5 410.8L739.9 422.1L807.1 442.6L761.1 472.0L789.7 476.7L771.0 489.0M759.5 410.8L758.6 421.5M739.9 422.1L786.5 451.6M807.1 442.6L742.9 459.6M761.1 472.0L791.1 480.0M771.0 489.0L807.1 442.6M771.0 489.0L782.0 422.6" stroke="#dcdcdc" stroke-width="1" fill="none" opacity="0.38" /><path d="M766.0 402.0L745.1 407.0L758.6 421.5L786.5 451.6L742.9 459.6L791.1 480.0L771.0 489.0M766.0 402.0L778.8 406.1L776.5 430.4L765.3 435.6L804.5 466.6L756.8 480.3L771.0 489.0M745.1 407.0L749.8 404.8L770.5 404.7L778.8 406.1L771.2 412.2L759.5 410.8ZM745.1 407.0L778.8 406.1M758.6 421.5L776.5 430.4M786.5 451.6L754.9 450.6L736.9 450.8L765.3 435.6L792.9 438.9L807.1 442.6ZM786.5 451.6L765.3 435.6M742.9 459.6L804.5 466.6M791.1 480.0L778.8 484.5L758.5 483.7L756.8 480.3L774.2 475.6L789.7 476.7ZM791.1 480.0L756.8 480.3M766.0 402.0L771.0 489.0" stroke="#e4e4e4" stroke-width="1" fill="none" opacity="0.55" /><path d="M758.6 421.5L782.0 422.6L797.4 429.3L776.5 430.4L759.4 431.7L739.9 422.1ZM742.9 459.6L766.4 458.6L790.5 458.0L804.5 466.6L797.0 467.3L761.1 472.0Z" stroke="#f2f2f2" stroke-width="1" fill="none" opacity="0.8" /><path d="M746.4 480.0L747.0 510.0L747.7 540.0" stroke="#d8a060" stroke-width="1.6" fill="none" /><path d="M748.6 480.0L749.2 510.0L749.9 540.0" stroke="#f4e8d0" stroke-width="1.5" fill="none" /><path d="M746.4 510.0L749.6 510.0" stroke="#a07040" stroke-width="1" fill="none" /><path d="M769.0 490.0L769.6 515.0L770.0 540.0" stroke="#d8a060" stroke-width="1.6" fill="none" /><path d="M771.0 490.0L771.6 515.0L772.0 540.0" stroke="#f4e8d0" stroke-width="1.5" fill="none" /><path d="M769.0 515.0L772.0 515.0" stroke="#a07040" stroke-width="1" fill="none" /></g><g shape-rendering="geometricPrecision"><path d="M638.8 380.0L765.0 377.5L765.0 618.0L641.0 618.0L638.8 380.0M617.5 488.8L791.0 490.0L791.0 557.0M617.5 488.8L617.5 561.0L800.0 561.0M798.8 492.0L798.8 557.0" stroke="#a8a8dc" stroke-width="1" fill="none" opacity="0.7" /><path d="M654.4 378.1L780.2 377.5L780.2 403.6L654.4 404.3Z" stroke="#a8a8dc" stroke-width="1" fill="none" /><path d="M658.8 394.0L658.8 613.5L776.5 613.5L776.5 404.5" stroke="#ececf4" stroke-width="1.6" fill="none" /><path d="M636.0 492.0L798.8 492.0M636.0 492.0L636.0 560.0M618.8 561.0L800.0 560.5" stroke="#ececf4" stroke-width="1.5" fill="none" /><path d="M637.9 422.8L698.4 422.8L698.8 568.8L640.0 569.0L637.9 422.8M637.9 422.8L654.9 430.1M698.4 422.8L713.5 430.1L713.8 567.0M698.8 568.8L713.8 567.0" stroke="#38384a" stroke-width="1.05" fill="none" /><path d="M654.9 430.1L713.5 430.1M654.9 430.1L655.5 568.0" stroke="#a8a8dc" stroke-width="1" fill="none" /><path d="M631.3 364.1L767.9 363.0L767.9 392.6L631.3 393.5ZM631.3 364.1L654.4 378.1M631.3 393.5L654.4 404.3M767.9 363.0L780.2 377.5M767.9 392.6L780.2 403.6" stroke="#141460" stroke-width="1.3" fill="none" /><g font-family="Liberation Sans,sans-serif" font-weight="bold" font-style="italic" text-rendering="geometricPrecision"><text x="641.300" y="376.300" font-size="11.800" fill="#4a2810" textLength="117" lengthAdjust="spacingAndGlyphs">POWERED BY</text><text x="640.300" y="375.600" font-size="11.800" fill="#cc6a20" stroke="#6a3410" stroke-width="0.25" textLength="117" lengthAdjust="spacingAndGlyphs">POWERED BY</text><text x="649.800" y="386.400" font-size="11.800" fill="#4a2810" textLength="100" lengthAdjust="spacingAndGlyphs" opacity="0.9">Control Web</text><text x="648.800" y="385.800" font-size="11.800" fill="#b06030" stroke="#6a3410" stroke-width="0.25" textLength="100" lengthAdjust="spacingAndGlyphs">Control Web</text></g></g><g shape-rendering="geometricPrecision"><path d="M1492.7 323.6L1482.4 357.5M1515.2 347.2L1541.5 376.1M1511.7 374.7L1546.1 417.1M1544.5 404.4L1528.9 445.2M1505.4 437.9L1478.0 467.8M1478.0 487.0L1544.5 404.4M1478.0 487.0L1546.1 383.1M1484.0 313.5L1481.7 325.7L1482.4 357.5L1541.5 376.1L1546.1 417.1L1528.9 445.2L1478.0 467.8L1478.0 487.0M1481.7 325.7L1454.3 349.3M1482.4 357.5L1546.1 383.1M1541.5 376.1L1515.1 423.5M1546.1 417.1L1538.3 450.2M1528.9 445.2L1498.3 468.1M1478.0 487.0L1541.5 376.1M1478.0 487.0L1440.2 339.9M1484.0 313.5L1466.7 320.8L1454.3 349.3L1546.1 383.1L1515.1 423.5L1538.3 450.2L1498.3 468.1L1478.0 487.0M1466.7 320.8L1440.2 339.9M1454.3 349.3L1518.1 390.7M1546.1 383.1L1476.5 427.6M1515.1 423.5L1519.0 463.5M1538.3 450.2L1506.0 474.7M1478.0 487.0L1515.1 423.5M1478.0 487.0L1457.8 387.4M1464.5 320.4L1457.9 342.4M1440.2 339.9L1457.8 387.4M1518.1 390.7L1449.1 423.1M1476.5 427.6L1493.4 465.2M1519.0 463.5L1502.2 475.5M1478.0 487.0L1506.0 474.7M1478.0 487.0L1462.5 452.6M1484.0 313.5L1469.6 315.6L1457.9 342.4L1457.8 387.4L1449.1 423.1L1493.4 465.2L1502.2 475.5L1478.0 487.0M1469.6 315.6L1475.9 341.2M1457.9 342.4L1439.5 379.4M1457.8 387.4L1446.8 408.0M1449.1 423.1L1462.5 452.6M1493.4 465.2L1487.0 476.6M1478.0 487.0L1449.1 423.1M1478.0 487.0L1446.9 376.4M1484.0 313.5L1486.1 318.8L1475.9 341.2L1439.5 379.4L1446.8 408.0L1462.5 452.6L1487.0 476.6L1478.0 487.0M1486.1 318.8L1526.7 340.4M1475.9 341.2L1446.9 376.4M1439.5 379.4L1474.3 408.5M1446.8 408.0L1453.1 455.0M1462.5 452.6L1480.5 475.2M1478.0 487.0L1462.5 452.6M1478.0 487.0L1506.4 406.8M1503.7 318.8L1533.2 345.1M1526.7 340.4L1470.9 369.7M1446.9 376.4L1506.4 406.8M1474.3 408.5L1480.0 443.0M1453.1 455.0L1468.3 476.9M1478.0 487.0L1453.1 455.0M1478.0 487.0L1544.5 404.4M1484.0 313.5L1503.3 320.1L1533.2 345.1L1470.9 369.7L1506.4 406.8L1480.0 443.0L1468.3 476.9L1478.0 487.0M1503.3 320.1L1515.2 347.2M1533.2 345.1L1511.7 374.7M1470.9 369.7L1544.5 404.4M1506.4 406.8L1505.4 437.9M1480.0 443.0L1471.1 471.7M1478.0 487.0L1470.9 369.7M1478.0 487.0L1482.4 357.5" stroke="#dcdcdc" stroke-width="1" fill="none" opacity="0.5" /><path d="M1484.0 313.5L1492.7 323.6L1515.2 347.2L1511.7 374.7L1544.5 404.4L1505.4 437.9L1471.1 471.7L1478.0 487.0M1484.0 313.5L1464.5 320.4L1440.2 339.9L1518.1 390.7L1476.5 427.6L1519.0 463.5L1506.0 474.7L1478.0 487.0M1484.0 313.5L1503.7 318.8L1526.7 340.4L1446.9 376.4L1474.3 408.5L1453.1 455.0L1480.5 475.2L1478.0 487.0M1492.7 323.6L1481.7 325.7L1466.7 320.8L1464.5 320.4L1469.6 315.6L1486.1 318.8L1503.7 318.8L1503.3 320.1ZM1492.7 323.6L1469.6 315.6M1515.2 347.2L1457.9 342.4M1511.7 374.7L1541.5 376.1L1546.1 383.1L1518.1 390.7L1457.8 387.4L1439.5 379.4L1446.9 376.4L1470.9 369.7ZM1511.7 374.7L1457.8 387.4M1544.5 404.4L1449.1 423.1M1505.4 437.9L1528.9 445.2L1538.3 450.2L1519.0 463.5L1493.4 465.2L1462.5 452.6L1453.1 455.0L1480.0 443.0ZM1505.4 437.9L1493.4 465.2M1471.1 471.7L1502.2 475.5M1484.0 313.5L1478.0 487.0" stroke="#e4e4e4" stroke-width="1" fill="none" opacity="0.72" /><path d="M1515.2 347.2L1482.4 357.5L1454.3 349.3L1440.2 339.9L1457.9 342.4L1475.9 341.2L1526.7 340.4L1533.2 345.1ZM1544.5 404.4L1546.1 417.1L1515.1 423.5L1476.5 427.6L1449.1 423.1L1446.8 408.0L1474.3 408.5L1506.4 406.8ZM1471.1 471.7L1478.0 467.8L1498.3 468.1L1506.0 474.7L1502.2 475.5L1487.0 476.6L1480.5 475.2L1468.3 476.9Z" stroke="#f2f2f2" stroke-width="1" fill="none" opacity="0.92" /><path d="M1401.6 364.9L1419.8 385.2M1403.0 379.4L1343.6 406.8M1357.1 412.6L1420.6 433.2M1439.4 435.5L1418.4 473.5M1429.9 467.3L1365.5 489.2M1385.9 496.0L1429.9 467.3M1385.9 496.0L1374.5 446.8M1385.0 356.5L1402.7 366.5L1419.8 385.2L1343.6 406.8L1420.6 433.2L1418.4 473.5L1365.5 489.2L1385.9 496.0M1402.7 366.5L1430.2 389.8M1419.8 385.2L1359.7 404.1M1343.6 406.8L1374.5 446.8M1420.6 433.2L1383.1 481.3M1418.4 473.5L1372.8 483.7M1385.9 496.0L1343.6 406.8M1385.9 496.0L1407.8 394.4M1385.0 356.5L1390.7 367.5L1430.2 389.8L1359.7 404.1L1374.5 446.8L1383.1 481.3L1372.8 483.7L1385.9 496.0M1390.7 367.5L1407.8 394.4M1430.2 389.8L1386.2 394.1M1359.7 404.1L1337.4 436.8M1374.5 446.8L1351.8 470.5M1383.1 481.3L1382.7 482.1M1385.9 496.0L1383.1 481.3M1385.9 496.0L1332.7 434.8M1366.2 368.1L1379.4 388.0M1407.8 394.4L1432.9 399.2M1386.2 394.1L1332.7 434.8M1337.4 436.8L1333.6 464.6M1351.8 470.5L1399.4 487.5M1385.9 496.0L1382.7 482.1M1385.9 496.0L1353.2 461.8M1385.0 356.5L1357.1 366.7L1379.4 388.0L1432.9 399.2L1332.7 434.8L1333.6 464.6L1399.4 487.5L1385.9 496.0M1357.1 366.7L1358.5 393.3M1379.4 388.0L1433.1 408.9M1432.9 399.2L1363.0 424.9M1332.7 434.8L1353.2 461.8M1333.6 464.6L1403.2 488.3M1385.9 496.0L1333.6 464.6M1385.9 496.0L1400.4 425.4M1385.0 356.5L1364.3 363.5L1358.5 393.3L1433.1 408.9L1363.0 424.9L1353.2 461.8L1403.2 488.3L1385.9 496.0M1364.3 363.5L1348.3 382.9M1358.5 393.3L1428.8 409.1M1433.1 408.9L1400.4 425.4M1363.0 424.9L1381.6 461.9M1353.2 461.8L1396.9 490.7M1385.9 496.0L1433.1 408.9M1385.9 496.0L1365.1 375.8M1376.9 357.5L1365.1 375.8M1348.3 382.9L1394.3 411.2M1428.8 409.1L1435.0 432.7M1400.4 425.4L1427.0 458.7M1381.6 461.9L1389.6 489.7M1385.9 496.0L1400.4 425.4M1385.9 496.0L1357.1 412.6M1385.0 356.5L1397.6 362.6L1365.1 375.8L1394.3 411.2L1435.0 432.7L1427.0 458.7L1389.6 489.7L1385.9 496.0M1397.6 362.6L1403.0 379.4M1365.1 375.8L1357.1 412.6M1394.3 411.2L1439.4 435.5M1435.0 432.7L1429.9 467.3M1427.0 458.7L1370.0 488.6M1385.9 496.0L1435.0 432.7M1385.9 496.0L1343.6 406.8" stroke="#dcdcdc" stroke-width="1" fill="none" opacity="0.5" /><path d="M1385.0 356.5L1401.6 364.9L1403.0 379.4L1357.1 412.6L1439.4 435.5L1429.9 467.3L1370.0 488.6L1385.9 496.0M1385.0 356.5L1366.2 368.1L1407.8 394.4L1386.2 394.1L1337.4 436.8L1351.8 470.5L1382.7 482.1L1385.9 496.0M1385.0 356.5L1376.9 357.5L1348.3 382.9L1428.8 409.1L1400.4 425.4L1381.6 461.9L1396.9 490.7L1385.9 496.0M1401.6 364.9L1402.7 366.5L1390.7 367.5L1366.2 368.1L1357.1 366.7L1364.3 363.5L1376.9 357.5L1397.6 362.6ZM1401.6 364.9L1357.1 366.7M1403.0 379.4L1379.4 388.0M1357.1 412.6L1343.6 406.8L1359.7 404.1L1386.2 394.1L1432.9 399.2L1433.1 408.9L1428.8 409.1L1394.3 411.2ZM1357.1 412.6L1432.9 399.2M1439.4 435.5L1332.7 434.8M1429.9 467.3L1418.4 473.5L1383.1 481.3L1351.8 470.5L1333.6 464.6L1353.2 461.8L1381.6 461.9L1427.0 458.7ZM1429.9 467.3L1333.6 464.6M1370.0 488.6L1399.4 487.5M1385.0 356.5L1385.9 496.0" stroke="#e4e4e4" stroke-width="1" fill="none" opacity="0.72" /><path d="M1403.0 379.4L1419.8 385.2L1430.2 389.8L1407.8 394.4L1379.4 388.0L1358.5 393.3L1348.3 382.9L1365.1 375.8ZM1439.4 435.5L1420.6 433.2L1374.5 446.8L1337.4 436.8L1332.7 434.8L1363.0 424.9L1400.4 425.4L1435.0 432.7ZM1370.0 488.6L1365.5 489.2L1372.8 483.7L1382.7 482.1L1399.4 487.5L1403.2 488.3L1396.9 490.7L1389.6 489.7Z" stroke="#f2f2f2" stroke-width="1" fill="none" opacity="0.92" /><path d="M1433.0 349.0L1502.0 342.5L1412.0 402.7M1463.7 379.7L1524.0 378.6L1506.4 399.4ZM1348.6 385.2L1401.2 379.7M1331.0 431.2L1401.2 379.7M1372.7 410.4L1421.0 409.3L1405.6 426.8Z" stroke="#f2f2f2" stroke-width="1" fill="none" opacity="0.9" /><path d="M1446.0 318.4L1467.0 314.0L1501.0 312.9L1537.0 331.5L1553.5 411.5L1543.7 460.8L1478.0 490.4L1455.0 455.3L1432.0 350.0ZM1358.5 361.0L1401.2 356.7L1433.0 374.2L1440.0 440.0L1425.0 480.0L1385.9 499.0L1337.7 483.8L1331.0 431.2Z" stroke="#dcdcdc" stroke-width="1" fill="none" opacity="0.6" /><path d="M1383.5 496.0L1384.1 523.5L1384.2 551.0" stroke="#d8b060" stroke-width="1.6" fill="none" /><path d="M1386.1 496.0L1386.7 523.5L1386.8 551.0" stroke="#f8f0d8" stroke-width="1.5" fill="none" /><path d="M1383.5 523.5L1387.1 523.5" stroke="#a07040" stroke-width="1" fill="none" /><path d="M1476.5 487.0L1477.1 520.5L1477.0 554.0" stroke="#d8b060" stroke-width="1.6" fill="none" /><path d="M1479.5 487.0L1480.1 520.5L1480.0 554.0" stroke="#f8f0d8" stroke-width="1.5" fill="none" /><path d="M1476.5 520.5L1480.5 520.5" stroke="#a07040" stroke-width="1" fill="none" /></g><path d="M820.3 535.5L1487.8 535.5L1487.8 547.5M820.3 535.5L820.3 547.8" stroke="#4c4c4c" stroke-width="1" fill="none" /><path d="M822.5 541.4L1487.0 541.4M822.5 537.0L822.5 547.0M824.5 539.0L824.5 546.0" stroke="#dadada" stroke-width="1" fill="none" /><path d="M820.3 547.8L1487.8 547.8M1467.0 537.0L1486.0 537.0L1486.0 546.5L1467.0 546.5Z" stroke="#a4a4a4" stroke-width="1" fill="none" /><g shape-rendering="geometricPrecision"><path d="M814.4 445.5L881.3 445.5L881.3 483.4L814.4 483.4ZM852.5 449.0L852.5 483.4M814.4 483.4L881.3 445.5M852.5 450.0L881.3 450.0M852.5 450.0L881.3 483.4" stroke="#6a86ac" stroke-width="1.3" fill="none" /><path d="M810.9 444.3L885.3 444.3M810.9 444.3L812.4 447.0M881.8 444.3L886.3 448.0M815.4 446.0L879.3 448.2M820.4 449.2L873.3 449.2M819.9 449.0L820.2 483.4M815.9 446.0L818.9 479.4M820.9 450.0L849.0 482.9M882.9 448.0L883.5 486.4M816.9 484.9L829.4 486.4M869.3 486.2L883.3 486.2" stroke="#343434" stroke-width="1" fill="none" opacity="0.85" /><path d="M831.5 485.3L868.6 485.3M832.0 485.3L832.5 556.0M833.2 485.3L833.4 556.0M868.6 485.3L868.8 601.0" stroke="#2c2c2c" stroke-width="1.1" fill="none" opacity="0.85" /><path d="M834.0 487.0L847.0 540.0M866.0 486.0L853.0 540.0M834.0 545.0L850.0 510.0M866.0 545.0L850.0 510.0" stroke="#a8a8a8" stroke-width="1" fill="none" opacity="0.8" /><path d="M996.3 446.0L1065.0 446.0L1065.0 483.8L996.3 483.8ZM1025.0 449.5L1025.0 483.8M996.3 483.8L1065.0 446.0M1025.0 450.5L1065.0 450.5M1025.0 450.5L1065.0 483.8" stroke="#6a86ac" stroke-width="1.3" fill="none" /><path d="M992.8 444.8L1069.0 444.8M992.8 444.8L994.3 447.5M1065.5 444.8L1070.0 448.5M997.3 446.5L1063.0 448.7M1002.3 449.7L1057.0 449.7M1001.8 449.5L1002.1 483.8M997.8 446.5L1000.8 479.8M1002.8 450.5L1031.7 483.3M1066.6 448.5L1067.2 486.8M998.8 485.3L1011.3 486.8M1053.0 486.6L1067.0 486.6" stroke="#343434" stroke-width="1" fill="none" opacity="0.85" /><path d="M1008.8 486.0L1008.8 550.0M1045.0 486.0L1045.0 550.0M1009.0 486.0L1045.0 548.0M1045.0 486.0L1009.0 548.0" stroke="#9a9a9a" stroke-width="1" fill="none" opacity="0.7" /><path d="M1176.3 446.0L1255.0 446.0L1255.0 484.0L1176.3 484.0ZM1187.5 449.5L1187.5 484.0M1205.0 449.5L1205.0 484.0M1240.0 449.5L1240.0 484.0M1176.3 484.0L1255.0 446.0M1187.5 450.5L1255.0 450.5M1187.5 450.5L1240.0 484.0M1240.0 447.5L1255.0 484.0M1176.3 484.0L1187.5 447.5" stroke="#6a86ac" stroke-width="1.3" fill="none" /><path d="M1172.8 444.8L1259.0 444.8M1172.8 444.8L1174.3 447.5M1255.5 444.8L1260.0 448.5M1177.3 446.5L1253.0 448.7M1182.3 449.7L1247.0 449.7M1181.8 449.5L1182.1 484.0M1177.8 446.5L1180.8 480.0M1182.8 450.5L1215.9 483.5M1256.6 448.5L1257.2 487.0M1178.8 485.5L1191.3 487.0M1243.0 486.8L1257.0 486.8" stroke="#343434" stroke-width="1" fill="none" opacity="0.85" /><path d="M1190.0 486.0L1190.0 552.0M1198.8 486.0L1198.8 552.0M1225.0 486.0L1225.0 552.0M1236.0 486.0L1236.0 552.0M1190.0 486.0L1225.0 548.0M1236.0 486.0L1199.0 548.0M1199.0 486.0L1236.0 548.0" stroke="#9a9a9a" stroke-width="1" fill="none" opacity="0.7" /><path d="M1356.3 444.5L1446.1 444.5L1446.1 484.0L1356.3 484.0ZM1376.0 448.0L1376.0 484.0M1384.8 448.0L1384.8 484.0M1422.0 448.0L1422.0 484.0M1356.3 484.0L1446.1 444.5M1376.0 449.0L1446.1 449.0M1376.0 449.0L1422.0 484.0M1422.0 446.0L1446.1 484.0M1356.3 484.0L1376.0 446.0" stroke="#6a86ac" stroke-width="1.3" fill="none" /><path d="M1352.8 443.3L1450.1 443.3M1352.8 443.3L1354.3 446.0M1446.6 443.3L1451.1 447.0M1357.3 445.0L1444.1 447.2M1362.3 448.2L1438.1 448.2M1361.8 448.0L1362.1 484.0M1357.8 445.0L1360.8 480.0M1362.8 449.0L1400.5 483.5M1447.7 447.0L1448.3 487.0M1358.8 485.5L1371.3 487.0M1434.1 486.8L1448.1 486.8" stroke="#343434" stroke-width="1" fill="none" opacity="0.85" /><path d="M1370.5 486.0L1370.5 548.0M1375.0 486.0L1375.0 548.0M1407.8 486.0L1407.8 548.0M1424.2 486.0L1424.2 548.0M1371.0 486.0L1408.0 546.0M1424.0 486.0L1376.0 546.0" stroke="#9a9a9a" stroke-width="1" fill="none" opacity="0.7" /></g><g shape-rendering="geometricPrecision"><path d="M167.0 770.0L742.5 597.0L1460.0 598.0L1594.0 613.0M763.5 567.0L1475.7 567.5M763.5 567.0L862.0 551.9L1165.0 551.9L1475.7 567.5" stroke="#1ee01e" stroke-width="1.3" fill="none" /></g><path d="M863.0 551.8L1007.0 551.8L1007.0 615.5L863.0 615.5ZM1041.5 550.8L1194.5 550.8L1194.5 614.8L1041.5 614.8ZM1230.5 552.3L1377.0 552.3L1377.0 616.0L1230.5 616.0Z" stroke="#f4f4f4" stroke-width="1.6" fill="none" /><g shape-rendering="geometricPrecision"><path d="M822.8 572.3L862.5 572.3L862.5 606.8L822.8 606.8ZM827.3 555.8L869.3 555.8L869.3 600.8L827.3 600.8ZM822.8 572.3L827.3 555.8M862.5 572.3L869.3 555.8M862.5 606.8L869.3 600.8M822.8 606.8L827.3 600.8M822.8 606.8L862.5 572.3M827.3 555.8L862.5 572.3M822.8 606.8L869.3 600.8M830.7 574.3L847.4 598.8" stroke="#56563c" stroke-width="1.1" fill="none" /><path d="M827.3 555.8L823.8 574.3L832.3 599.8L827.3 555.8M866.3 555.8L862.5 574.3M868.8 559.8L869.3 598.8M832.3 599.8L825.8 604.8" stroke="#2a2a24" stroke-width="1" fill="none" opacity="0.85" /><path d="M1016.5 571.8L1056.3 571.8L1056.3 607.0L1016.5 607.0ZM1010.5 555.3L1051.0 555.3L1051.0 601.5L1010.5 601.5ZM1016.5 571.8L1010.5 555.3M1056.3 571.8L1051.0 555.3M1056.3 607.0L1051.0 601.5M1016.5 607.0L1010.5 601.5M1016.5 607.0L1056.3 571.8M1010.5 555.3L1056.3 571.8M1016.5 607.0L1051.0 601.5M1024.5 573.8L1041.2 599.0" stroke="#56563c" stroke-width="1.1" fill="none" /><path d="M1010.5 555.3L1017.5 573.8L1015.5 600.5L1010.5 555.3M1048.0 555.3L1056.3 573.8M1050.5 559.3L1051.0 599.5M1015.5 600.5L1019.5 605.0" stroke="#2a2a24" stroke-width="1" fill="none" opacity="0.85" /><path d="M1219.1 572.6L1258.9 572.6L1258.9 607.5L1219.1 607.5ZM1188.0 556.3L1188.0 600.5M1206.8 555.5L1206.8 605.0M1223.6 555.5L1223.6 600.5M1245.0 555.5L1245.0 605.0M1199.3 555.5L1245.0 555.5M1206.8 555.5L1219.1 572.6M1245.0 555.5L1258.9 572.6M1208.3 556.3L1258.9 572.6M1188.8 557.0L1218.8 592.6M1206.0 556.0L1188.8 597.0M1218.8 573.8L1207.5 600.0M1225.5 556.0L1242.8 602.3M1258.9 573.0L1220.3 606.8M1247.3 562.5L1257.8 605.3M1187.3 600.0L1219.1 607.5M1206.8 605.0L1245.0 605.0L1258.9 607.5M1188.0 600.5L1206.8 605.0" stroke="#56563c" stroke-width="1.15" fill="none" /><path d="M1421.0 573.4L1461.5 573.4L1461.5 608.5L1421.0 608.5ZM1368.3 556.7L1368.3 601.5M1393.0 555.9L1393.0 606.0M1404.5 555.9L1404.5 601.5M1438.5 555.9L1438.5 606.0M1385.5 555.9L1438.5 555.9M1393.0 555.9L1421.0 573.4M1438.5 555.9L1461.5 573.4M1394.5 556.7L1461.5 573.4M1369.1 557.4L1420.7 593.4M1392.2 556.4L1369.1 598.0M1420.7 574.6L1393.7 601.0M1406.4 556.4L1436.3 603.3M1461.5 573.8L1422.2 607.8M1440.8 562.9L1460.4 606.3M1367.6 601.0L1421.0 608.5M1393.0 606.0L1438.5 606.0L1461.5 608.5M1368.3 601.5L1393.0 606.0" stroke="#56563c" stroke-width="1.15" fill="none" /></g><g shape-rendering="geometricPrecision"><path d="M699.8 543.3L869.3 639.8M726.8 540.0L837.8 543.0L905.3 581.3L881.3 628.5L726.8 540.0" stroke="#1c1c1c" stroke-width="1.1" fill="none" opacity="0.9" /><path d="M699.8 543.3L869.3 639.8M726.8 540.0L837.8 543.0L905.3 581.3L881.3 628.5L726.8 540.0" stroke="#f0f0f0" stroke-width="1.2" fill="none" opacity="0.85" stroke-dasharray="2 31 1.500 47"/><path d="M1240.0 544.8L1169.5 543.3M1165.0 547.5L1115.0 600.0L1338.0 682.8L1464.8 553.7L1381.5 551.5M1594.0 557.0L1499.8 557.0L1382.6 703.8L1594.0 775.0" stroke="#d0d0d0" stroke-width="1" fill="none" opacity="0.45" /><path d="M1240.0 544.8L1169.5 543.3M1165.0 547.5L1115.0 600.0L1338.0 682.8L1464.8 553.7L1381.5 551.5M1594.0 557.0L1499.8 557.0L1382.6 703.8L1594.0 775.0" stroke="#202020" stroke-width="1" fill="none" opacity="0.8" stroke-dasharray="11 2 2 2"/><path d="M869.3 639.8L556.6 1193.5" stroke="#101010" stroke-width="1.25" fill="none" /></g><g shape-rendering="geometricPrecision"><polygon points="1308.0,646.0 1309.5,642.9 1311.0,641.2 1312.6,639.9 1314.1,638.8 1315.6,638.2 1317.2,637.6 1318.7,637.0 1320.2,636.5 1321.7,636.2 1323.2,636.0 1324.8,635.8 1326.3,635.6 1327.8,635.3 1329.3,635.1 1330.9,635.0 1332.4,635.1 1333.9,635.2 1335.5,635.3 1337.0,635.3 1338.5,635.4 1340.0,635.5 1341.5,636.0 1343.1,636.4 1344.6,636.9 1346.1,637.3 1347.7,637.8 1349.2,638.3 1350.7,638.9 1352.2,639.6 1353.8,640.4 1355.3,641.1 1356.8,641.9 1358.3,642.7 1359.8,643.4 1361.4,644.3 1362.9,645.2 1364.4,646.1 1366.0,647.0 1367.5,647.5 1369.0,648.0 1369.0,650.0 1367.5,650.3 1366.0,650.5 1364.4,651.0 1362.9,651.5 1361.4,652.0 1359.8,652.5 1358.3,652.9 1356.8,653.3 1355.3,653.7 1353.8,654.1 1352.2,654.4 1350.7,654.8 1349.2,655.1 1347.7,655.2 1346.1,655.4 1344.6,655.5 1343.1,655.7 1341.5,655.8 1340.0,656.0 1338.5,655.9 1337.0,655.9 1335.5,655.8 1333.9,655.7 1332.4,655.7 1330.9,655.6 1329.3,655.6 1327.8,655.5 1326.3,655.2 1324.8,655.0 1323.2,654.7 1321.7,654.4 1320.2,654.2 1318.7,653.9 1317.2,653.5 1315.6,652.9 1314.1,652.4 1312.6,651.7 1311.0,650.6 1309.5,649.5 1308.0,646.0" fill="#d4d4d4" opacity="0.42"/><polygon points="1369.0,649.0 1378.0,643.0 1387.0,641.6 1385.0,652.0 1387.0,664.6 1377.0,658.0" fill="#d4d4d4" opacity="0.42"/><polygon points="1336.0,635.3 1343.5,629.0 1347.5,632.0 1361.0,644.0" fill="#d4d4d4" opacity="0.42"/><polygon points="1335.0,655.5 1344.0,656.7 1341.0,664.0 1337.6,666.0" fill="#d4d4d4" opacity="0.42"/><polygon points="1355.4,655.0 1364.5,653.5 1363.5,662.0 1361.0,664.6" fill="#d4d4d4" opacity="0.42"/><path d="M1309.5 643.3L1311.0 641.7L1312.6 640.6L1314.1 639.5L1315.6 639.0L1317.2 638.5L1318.7 637.9L1320.2 637.5L1321.7 637.3L1323.2 637.1L1324.8 636.8L1326.3 636.6L1327.8 636.4L1329.3 636.2L1330.9 636.2L1332.4 636.3L1333.9 636.3L1335.5 636.4L1337.0 636.5L1338.5 636.6L1340.0 636.6L1341.5 637.1L1343.1 637.5L1344.6 637.9L1346.1 638.3L1347.7 638.8L1349.2 639.2L1350.7 639.7L1352.2 640.4L1353.8 641.1L1355.3 641.8L1356.8 642.5L1358.3 643.2L1359.8 643.9L1361.4 644.7L1362.9 645.5L1364.4 646.4L1366.0 647.2L1367.5 647.6M1309.5 644.0L1311.0 642.7L1312.6 641.9L1314.1 641.0L1315.6 640.6L1317.2 640.2L1318.7 639.8L1320.2 639.4L1321.7 639.3L1323.2 639.1L1324.8 639.0L1326.3 638.8L1327.8 638.7L1329.3 638.5L1330.9 638.5L1332.4 638.5L1333.9 638.6L1335.5 638.7L1337.0 638.8L1338.5 638.8L1340.0 638.9L1341.5 639.3L1343.1 639.6L1344.6 640.0L1346.1 640.3L1347.7 640.7L1349.2 641.1L1350.7 641.5L1352.2 642.1L1353.8 642.7L1355.3 643.2L1356.8 643.8L1358.3 644.4L1359.8 644.9L1361.4 645.6L1362.9 646.2L1364.4 646.9L1366.0 647.6L1367.5 648.0M1309.5 644.8L1311.0 643.8L1312.6 643.2L1314.1 642.5L1315.6 642.3L1317.2 642.0L1318.7 641.7L1320.2 641.4L1321.7 641.3L1323.2 641.2L1324.8 641.1L1326.3 641.0L1327.8 640.9L1329.3 640.8L1330.9 640.8L1332.4 640.8L1333.9 640.9L1335.5 641.0L1337.0 641.1L1338.5 641.1L1340.0 641.2L1341.5 641.5L1343.1 641.8L1344.6 642.1L1346.1 642.4L1347.7 642.6L1349.2 642.9L1350.7 643.3L1352.2 643.7L1353.8 644.2L1355.3 644.6L1356.8 645.1L1358.3 645.5L1359.8 646.0L1361.4 646.5L1362.9 647.0L1364.4 647.5L1366.0 648.0L1367.5 648.3M1309.5 645.5L1311.0 644.8L1312.6 644.5L1314.1 644.1L1315.6 643.9L1317.2 643.8L1318.7 643.6L1320.2 643.4L1321.7 643.3L1323.2 643.3L1324.8 643.2L1326.3 643.2L1327.8 643.2L1329.3 643.1L1330.9 643.0L1332.4 643.1L1333.9 643.2L1335.5 643.3L1337.0 643.3L1338.5 643.4L1340.0 643.5L1341.5 643.7L1343.1 643.9L1344.6 644.1L1346.1 644.4L1347.7 644.6L1349.2 644.8L1350.7 645.1L1352.2 645.4L1353.8 645.7L1355.3 646.0L1356.8 646.3L1358.3 646.7L1359.8 647.0L1361.4 647.3L1362.9 647.7L1364.4 648.0L1366.0 648.3L1367.5 648.6M1309.5 646.2L1311.0 645.9L1312.6 645.8L1314.1 645.6L1315.6 645.6L1317.2 645.5L1318.7 645.5L1320.2 645.3L1321.7 645.3L1323.2 645.4L1324.8 645.4L1326.3 645.4L1327.8 645.4L1329.3 645.3L1330.9 645.3L1332.4 645.4L1333.9 645.5L1335.5 645.5L1337.0 645.6L1338.5 645.7L1340.0 645.8L1341.5 645.9L1343.1 646.1L1344.6 646.2L1346.1 646.4L1347.7 646.5L1349.2 646.7L1350.7 646.8L1352.2 647.0L1353.8 647.2L1355.3 647.4L1356.8 647.6L1358.3 647.8L1359.8 648.0L1361.4 648.2L1362.9 648.4L1364.4 648.6L1366.0 648.7L1367.5 648.9M1309.5 647.0L1311.0 646.9L1312.6 647.1L1314.1 647.1L1315.6 647.2L1317.2 647.3L1318.7 647.3L1320.2 647.3L1321.7 647.4L1323.2 647.4L1324.8 647.5L1326.3 647.6L1327.8 647.6L1329.3 647.6L1330.9 647.6L1332.4 647.7L1333.9 647.8L1335.5 647.8L1337.0 647.9L1338.5 648.0L1340.0 648.0L1341.5 648.1L1343.1 648.2L1344.6 648.3L1346.1 648.4L1347.7 648.5L1349.2 648.5L1350.7 648.6L1352.2 648.7L1353.8 648.7L1355.3 648.8L1356.8 648.9L1358.3 648.9L1359.8 649.0L1361.4 649.0L1362.9 649.1L1364.4 649.1L1366.0 649.1L1367.5 649.2M1309.5 647.7L1311.0 648.0L1312.6 648.4L1314.1 648.6L1315.6 648.8L1317.2 649.1L1318.7 649.2L1320.2 649.3L1321.7 649.4L1323.2 649.5L1324.8 649.6L1326.3 649.8L1327.8 649.9L1329.3 649.9L1330.9 649.9L1332.4 650.0L1333.9 650.0L1335.5 650.1L1337.0 650.2L1338.5 650.2L1340.0 650.3L1341.5 650.3L1343.1 650.3L1344.6 650.4L1346.1 650.4L1347.7 650.4L1349.2 650.4L1350.7 650.4L1352.2 650.3L1353.8 650.3L1355.3 650.2L1356.8 650.1L1358.3 650.1L1359.8 650.0L1361.4 649.9L1362.9 649.8L1364.4 649.7L1366.0 649.5L1367.5 649.5M1309.5 648.4L1311.0 649.0L1312.6 649.7L1314.1 650.1L1315.6 650.5L1317.2 650.8L1318.7 651.1L1320.2 651.2L1321.7 651.4L1323.2 651.6L1324.8 651.8L1326.3 651.9L1327.8 652.1L1329.3 652.1L1330.9 652.2L1332.4 652.3L1333.9 652.3L1335.5 652.4L1337.0 652.5L1338.5 652.5L1340.0 652.6L1341.5 652.5L1343.1 652.5L1344.6 652.4L1346.1 652.4L1347.7 652.3L1349.2 652.3L1350.7 652.2L1352.2 652.0L1353.8 651.8L1355.3 651.6L1356.8 651.4L1358.3 651.2L1359.8 651.0L1361.4 650.8L1362.9 650.5L1364.4 650.2L1366.0 649.9L1367.5 649.8M1309.5 649.2L1311.0 650.1L1312.6 651.0L1314.1 651.6L1315.6 652.1L1317.2 652.6L1318.7 653.0L1320.2 653.2L1321.7 653.4L1323.2 653.7L1324.8 653.9L1326.3 654.1L1327.8 654.4L1329.3 654.4L1330.9 654.5L1332.4 654.5L1333.9 654.6L1335.5 654.7L1337.0 654.7L1338.5 654.8L1340.0 654.9L1341.5 654.7L1343.1 654.6L1344.6 654.5L1346.1 654.4L1347.7 654.3L1349.2 654.1L1350.7 653.9L1352.2 653.6L1353.8 653.3L1355.3 653.0L1356.8 652.7L1358.3 652.3L1359.8 652.0L1361.4 651.6L1362.9 651.2L1364.4 650.8L1366.0 650.3L1367.5 650.1M1310.2 641.2L1311.8 650.6M1313.3 638.8L1314.9 652.4M1316.4 637.6L1318.0 653.5M1319.4 636.5L1321.0 654.2M1322.5 636.0L1324.0 654.7M1325.5 635.6L1327.1 655.2M1328.5 635.1L1330.1 655.6M1331.6 635.1L1333.2 655.7M1334.7 635.3L1336.2 655.8M1337.7 635.4L1339.3 655.9M1340.8 636.0L1342.3 655.8M1343.8 636.9L1345.4 655.5M1346.9 637.8L1348.5 655.2M1349.9 638.9L1351.5 654.8M1353.0 640.4L1354.5 654.1M1356.0 641.9L1357.6 653.3M1359.0 643.4L1360.6 652.5M1362.1 645.2L1363.7 651.5M1365.2 647.0L1366.8 650.5M1369.0 649.0L1378.0 643.0M1369.0 649.0L1381.3 642.5M1369.0 649.0L1384.5 642.0M1369.0 649.0L1386.8 642.5M1369.0 649.0L1386.1 646.3M1369.0 649.0L1385.4 650.1M1369.0 649.0L1385.4 654.3M1369.0 649.0L1386.1 658.9M1369.0 649.0L1386.8 663.5M1369.0 649.0L1384.3 662.8M1369.0 649.0L1380.6 660.4M1369.0 649.0L1377.0 658.0M1369.0 649.0L1378.0 643.0L1387.0 641.6L1385.0 652.0L1387.0 664.6L1377.0 658.0ZM1336.0 635.3L1343.5 629.0M1336.0 635.3L1344.6 629.9M1336.0 635.3L1345.8 630.7M1336.0 635.3L1346.9 631.6M1336.0 635.3L1349.4 633.7M1336.0 635.3L1353.3 637.1M1336.0 635.3L1357.1 640.6M1336.0 635.3L1361.0 644.0M1336.0 635.3L1343.5 629.0L1347.5 632.0L1361.0 644.0ZM1335.0 655.5L1344.0 656.7M1335.0 655.5L1342.8 659.6M1335.0 655.5L1341.6 662.5M1335.0 655.5L1340.3 664.4M1335.0 655.5L1339.0 665.2M1335.0 655.5L1337.6 666.0M1335.0 655.5L1344.0 656.7L1341.0 664.0L1337.6 666.0ZM1355.4 655.0L1364.5 653.5M1355.4 655.0L1364.1 656.9M1355.4 655.0L1363.7 660.3M1355.4 655.0L1363.0 662.5M1355.4 655.0L1362.0 663.6M1355.4 655.0L1361.0 664.6M1355.4 655.0L1364.5 653.5L1363.5 662.0L1361.0 664.6Z" stroke="#f2f2f2" stroke-width="0.7" fill="none" opacity="0.62" /></g></svg>
</div>
</div></body></html>
